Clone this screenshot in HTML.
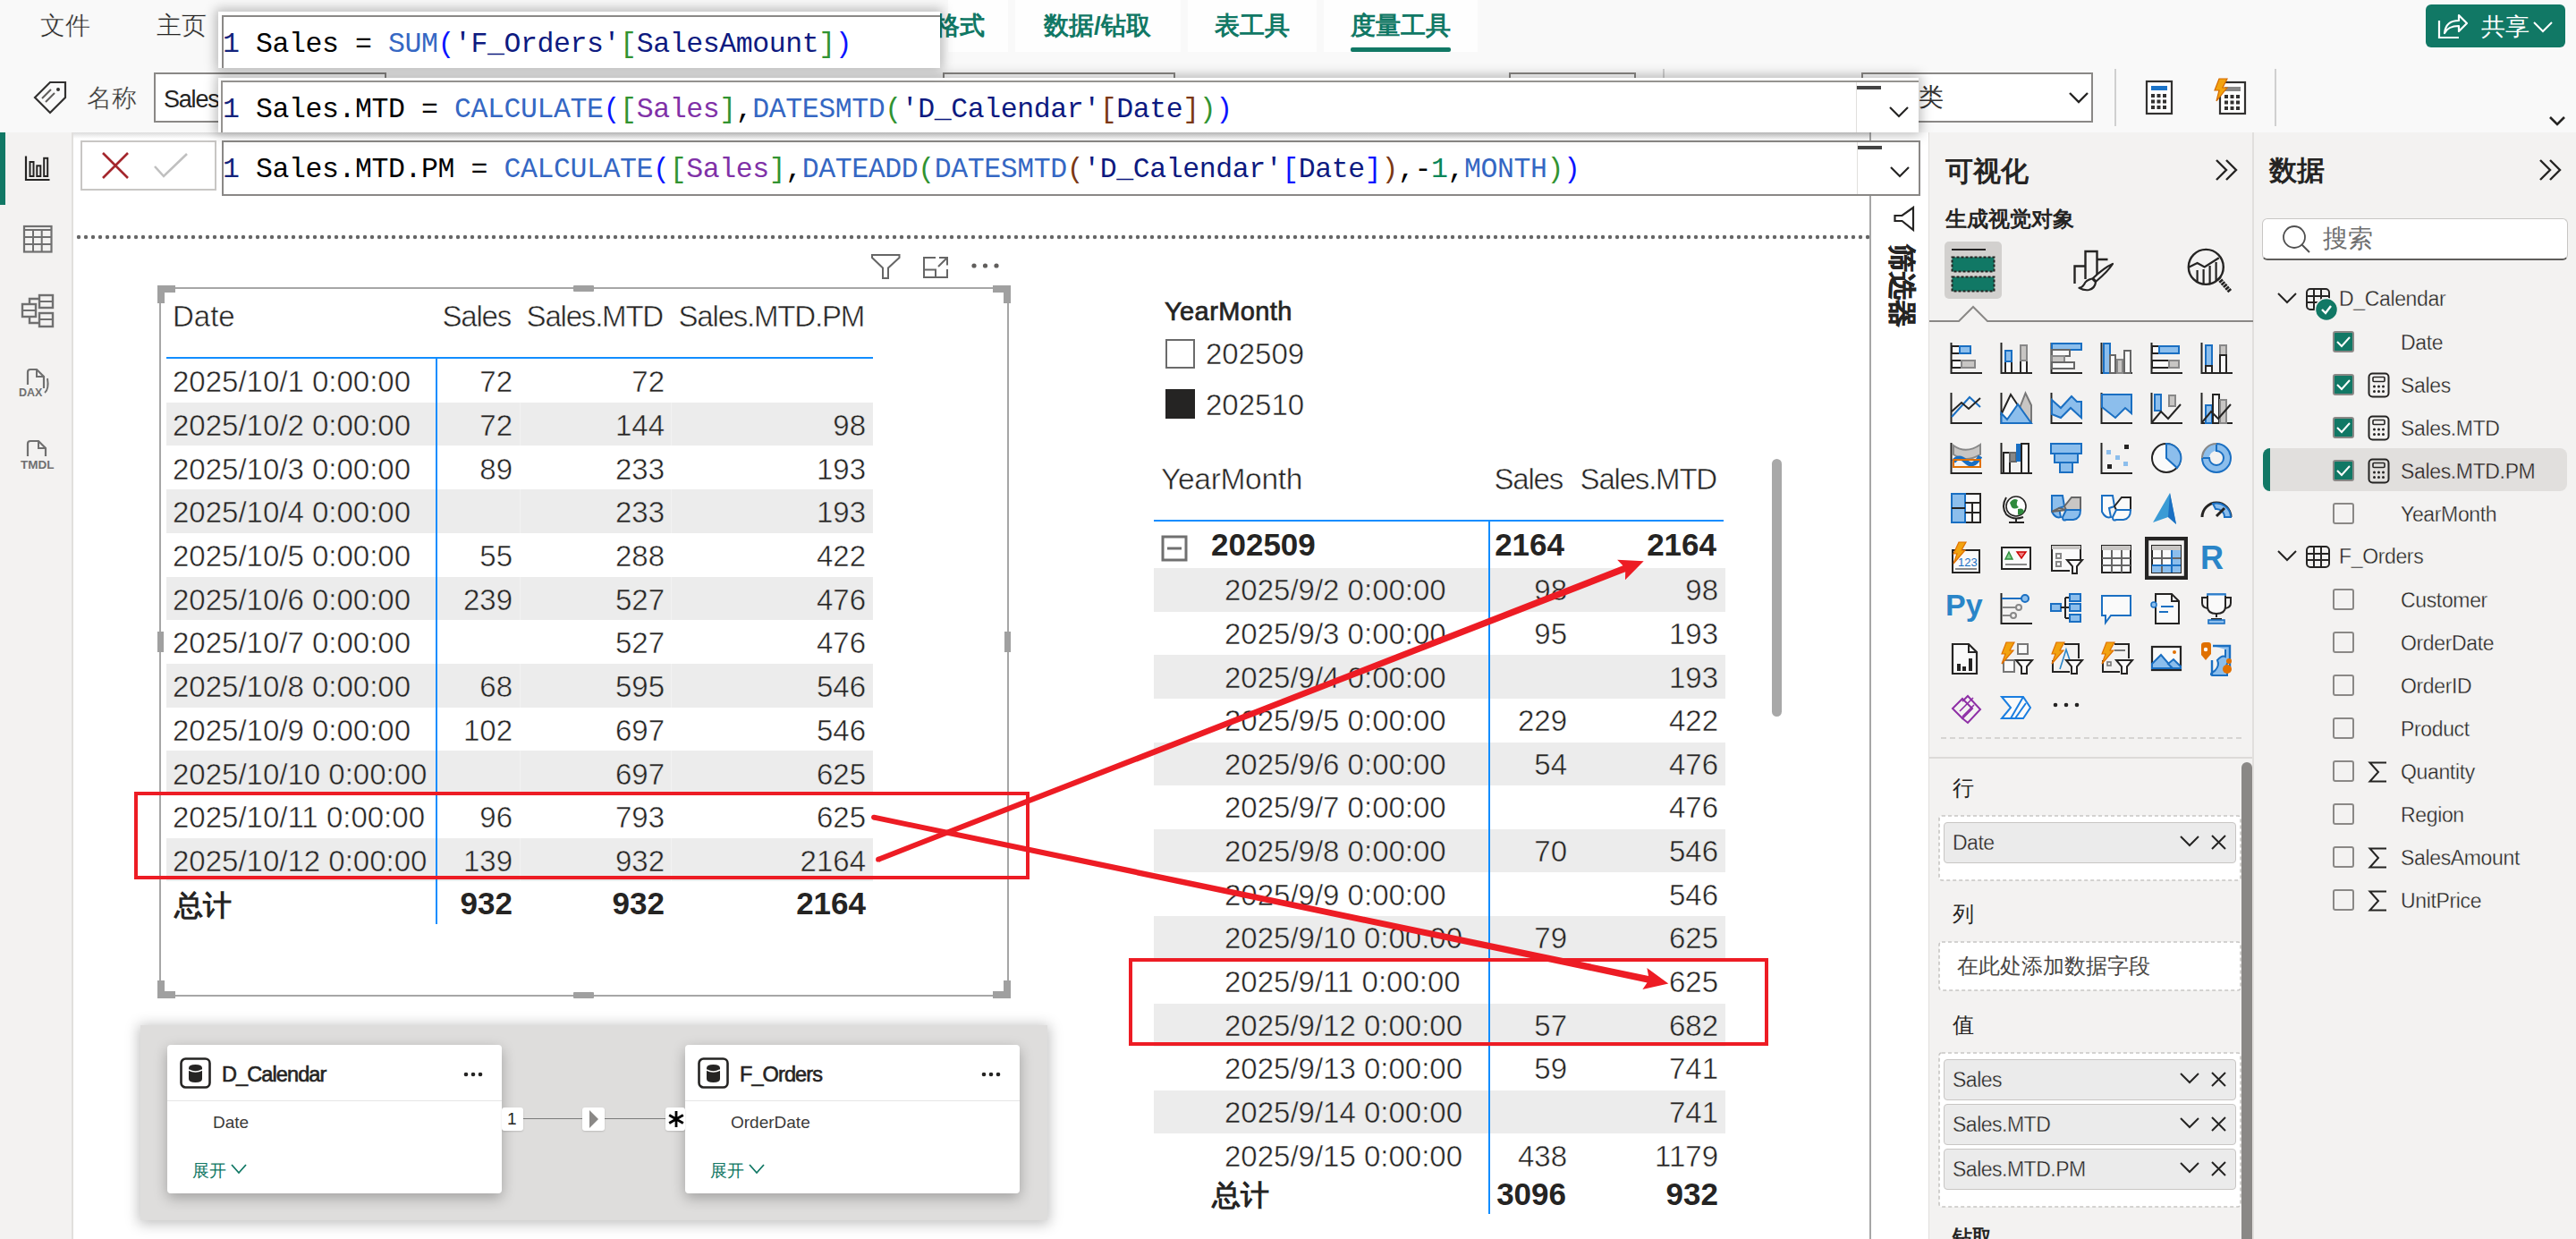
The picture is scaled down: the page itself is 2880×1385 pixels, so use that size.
<!DOCTYPE html><html><head><meta charset="utf-8"><style>
html,body{margin:0;padding:0;}
body{width:2880px;height:1385px;position:relative;overflow:hidden;background:#fff;font-family:"Liberation Sans",sans-serif;}
div{position:absolute;box-sizing:border-box;}
.t{white-space:pre;line-height:1;}
</style></head><body>
<div style="left:0px;top:0px;width:2880px;height:148px;background:#f9f9f9;"></div>
<div style="left:1060px;top:0px;width:67px;height:58px;background:#fefefe;"></div>
<div style="left:1135px;top:0px;width:185px;height:58px;background:#fefefe;"></div>
<div style="left:1328px;top:0px;width:144px;height:58px;background:#fefefe;"></div>
<div style="left:1480px;top:0px;width:172px;height:58px;background:#fefefe;"></div>
<div class="t" style="left:45px;top:15px;font-size:28px;color:#252423;font-weight:400;font-family:'Liberation Sans', sans-serif;-webkit-text-stroke:0.4px #f9f9f9;">文件</div>
<div class="t" style="left:175px;top:15px;font-size:28px;color:#252423;font-weight:400;font-family:'Liberation Sans', sans-serif;-webkit-text-stroke:0.4px #f9f9f9;">主页</div>
<div class="t" style="left:1045px;top:15px;font-size:28px;color:#117865;font-weight:700;font-family:'Liberation Sans', sans-serif;">格式</div>
<div class="t" style="left:1167px;top:15px;font-size:28px;color:#117865;font-weight:700;font-family:'Liberation Sans', sans-serif;">数据/钻取</div>
<div class="t" style="left:1358px;top:15px;font-size:28px;color:#117865;font-weight:700;font-family:'Liberation Sans', sans-serif;">表工具</div>
<div class="t" style="left:1510px;top:15px;font-size:28px;color:#117865;font-weight:700;font-family:'Liberation Sans', sans-serif;">度量工具</div>
<div style="left:1510px;top:53px;width:112px;height:5px;background:#117865;border-radius:2px;"></div>
<div style="left:2712px;top:5px;width:156px;height:48px;background:#117865;border-radius:6px;"></div>
<svg style="position:absolute;left:2724px;top:13px;" width="36" height="32" viewBox="0 0 36 32"><path d="M3 10 V29 H25" fill="none" stroke="#fff" stroke-width="2.2"/><path d="M9 24 C10 14 16 10 25 10 V4 L34 13 L25 22 V16 C17 16 12 18 9 24 Z" fill="none" stroke="#fff" stroke-width="2.2" stroke-linejoin="round"/></svg>
<div class="t" style="left:2774px;top:17px;font-size:27px;color:#fff;font-weight:400;font-family:'Liberation Sans', sans-serif;">共享</div>
<svg style="position:absolute;left:2830px;top:22px;" width="26" height="16" viewBox="0 0 26 16"><path d="M3 3 L13 13 L23 3" fill="none" stroke="#fff" stroke-width="2"/></svg>
<svg style="position:absolute;left:36px;top:89px;" width="40" height="40" viewBox="0 0 40 40"><path d="M3 20 L20 3 L37 3 L37 20 L20 37 Z" fill="none" stroke="#323130" stroke-width="2.2" stroke-linejoin="miter" transform="translate(0,0)"/><circle cx="29" cy="11" r="2" fill="#323130"/><path d="M11 21 L21 11 M15 25 L25 15" stroke="#605e5c" stroke-width="2"/></svg>
<div class="t" style="left:97px;top:96px;font-size:28px;color:#323130;font-weight:400;font-family:'Liberation Sans', sans-serif;-webkit-text-stroke:0.4px #f9f9f9;">名称</div>
<div style="left:172px;top:81px;width:260px;height:56px;background:#fff;border:2px solid #8a8886;"></div>
<div class="t" style="left:183px;top:97.5px;font-size:27px;color:#252423;font-weight:400;font-family:'Liberation Sans', sans-serif;letter-spacing:-1.2px;">Sales</div>
<div style="left:1054px;top:81px;width:260px;height:56px;background:#fff;border:2px solid #8a8886;"></div>
<div style="left:1687px;top:81px;width:142px;height:56px;background:#fff;border:2px solid #8a8886;"></div>
<div style="left:1859px;top:77px;width:2px;height:64px;background:#d0d0d0;"></div>
<div style="left:2081px;top:81px;width:259px;height:56px;background:#fff;border:2px solid #8a8886;"></div>
<div class="t" style="left:2145px;top:95px;font-size:28px;color:#323130;font-weight:400;font-family:'Liberation Sans', sans-serif;">类</div>
<svg style="position:absolute;left:2312px;top:101px;" width="24" height="16" viewBox="0 0 24 16"><path d="M2 3 L12 13 L22 3" fill="none" stroke="#252423" stroke-width="2.4"/></svg>
<div style="left:2364px;top:77px;width:2px;height:64px;background:#d0d0d0;"></div>
<svg style="position:absolute;left:2398px;top:89px;" width="34" height="40" viewBox="0 0 34 40"><rect x="2" y="2" width="28" height="36" fill="#fff" stroke="#323130" stroke-width="2.2"/><rect x="7" y="7" width="18" height="5" fill="#1a73c8"/><rect x="7.0" y="16.0" width="4" height="4" fill="#323130"/><rect x="7.0" y="22.5" width="4" height="4" fill="#323130"/><rect x="7.0" y="29.0" width="4" height="4" fill="#323130"/><rect x="13.5" y="16.0" width="4" height="4" fill="#323130"/><rect x="13.5" y="22.5" width="4" height="4" fill="#323130"/><rect x="13.5" y="29.0" width="4" height="4" fill="#323130"/><rect x="20.0" y="16.0" width="4" height="4" fill="#323130"/><rect x="20.0" y="22.5" width="4" height="4" fill="#323130"/><rect x="20.0" y="29.0" width="4" height="4" fill="#323130"/></svg>
<svg style="position:absolute;left:2472px;top:87px;" width="40" height="42" viewBox="0 0 40 42"><rect x="10" y="5" width="28" height="35" fill="#fff" stroke="#323130" stroke-width="2.2"/><rect x="15" y="10" width="18" height="5" fill="#888"/><rect x="15.0" y="19.0" width="4" height="4" fill="#323130"/><rect x="15.0" y="25.5" width="4" height="4" fill="#323130"/><rect x="15.0" y="32.0" width="4" height="4" fill="#323130"/><rect x="21.5" y="19.0" width="4" height="4" fill="#323130"/><rect x="21.5" y="25.5" width="4" height="4" fill="#323130"/><rect x="21.5" y="32.0" width="4" height="4" fill="#323130"/><rect x="28.0" y="19.0" width="4" height="4" fill="#323130"/><rect x="28.0" y="25.5" width="4" height="4" fill="#323130"/><rect x="28.0" y="32.0" width="4" height="4" fill="#323130"/><path d="M9 1 H18 L13 11 H18 L6 26 L9 14 H4 Z" fill="#f2a30f" stroke="#d56b00" stroke-width="1.2"/></svg>
<div style="left:2543px;top:77px;width:2px;height:64px;background:#d0d0d0;"></div>
<svg style="position:absolute;left:2848px;top:128px;" width="22" height="16" viewBox="0 0 22 16"><path d="M3 3 L11 11 L19 3" fill="none" stroke="#252423" stroke-width="2.6"/></svg>
<div style="left:0px;top:148px;width:2880px;height:7px;background:linear-gradient(#dcdcdc,rgba(255,255,255,0));"></div>
<div style="left:0px;top:148px;width:80px;height:1237px;background:#f3f2f1;"></div>
<div style="left:80px;top:148px;width:2px;height:1237px;background:#e1dfdd;"></div>
<div style="left:0px;top:148px;width:6px;height:81px;background:#117865;"></div>
<svg style="position:absolute;left:26px;top:172px;" width="32" height="32" viewBox="0 0 32 32"><path d="M3 2.5 V29 H29.5" fill="none" stroke="#252423" stroke-width="2.2"/><rect x="7.5" y="9" width="4" height="16" fill="none" stroke="#252423" stroke-width="2"/><rect x="15.3" y="13.3" width="4" height="11.7" fill="none" stroke="#252423" stroke-width="2"/><rect x="23.2" y="4.8" width="4" height="20.2" fill="none" stroke="#252423" stroke-width="2"/></svg>
<svg style="position:absolute;left:24px;top:250px;" width="36" height="34" viewBox="0 0 36 34"><rect x="3" y="3" width="30.5" height="28.5" fill="none" stroke="#707070" stroke-width="2.2"/><path d="M3 7 H33.5 M3 15 H33.5 M3 23 H33.5 M13 7 V31.5 M22.7 7 V31.5" stroke="#707070" stroke-width="2"/></svg>
<svg style="position:absolute;left:22px;top:328px;" width="40" height="40" viewBox="0 0 40 40"><rect x="3" y="12" width="15" height="14" fill="none" stroke="#707070" stroke-width="2.4"/><path d="M3 19 H18" stroke="#707070" stroke-width="2"/><rect x="22" y="2" width="15" height="14" fill="none" stroke="#707070" stroke-width="2.4"/><path d="M22 9 H37" stroke="#707070" stroke-width="2"/><rect x="22" y="22" width="15" height="15" fill="none" stroke="#707070" stroke-width="2.4"/><path d="M22 29 H37" stroke="#707070" stroke-width="2"/><path d="M11 12 V6 H22 M11 26 V33 H22" fill="none" stroke="#707070" stroke-width="2.4"/></svg>
<svg style="position:absolute;left:20px;top:410px;" width="40" height="36" viewBox="0 0 40 36"><path d="M11 20 V6 Q11 3 14 3 H21 L29 11 V24" fill="none" stroke="#707070" stroke-width="2.2"/><path d="M21 3 V11 H29" fill="none" stroke="#707070" stroke-width="2"/><path d="M33 13 Q35 25 30 29" fill="none" stroke="#707070" stroke-width="2"/><text x="1" y="33" font-family="Liberation Sans" font-weight="700" font-size="12.5" fill="#707070">DAX</text></svg>
<svg style="position:absolute;left:20px;top:490px;" width="44" height="36" viewBox="0 0 44 36"><path d="M11 20 V6 Q11 3 14 3 H23 L31 11 V20" fill="none" stroke="#707070" stroke-width="2.2"/><path d="M23 3 V11 H31" fill="none" stroke="#707070" stroke-width="2"/><text x="3" y="34" font-family="Liberation Sans" font-weight="700" font-size="13.5" fill="#707070">TMDL</text></svg>
<svg style="position:absolute;left:84px;top:262px;" width="2006" height="6" viewBox="0 0 2006 6"><line x1="4" y1="3" x2="2006" y2="3" stroke="#666" stroke-width="4.4" stroke-linecap="round" stroke-dasharray="0 8"/></svg>
<div style="left:2090px;top:148px;width:2px;height:1237px;background:#a6a6a6;"></div>
<div style="left:2092px;top:148px;width:64px;height:1237px;background:#fff;"></div>
<div style="left:2156px;top:148px;width:2px;height:1237px;background:#e1dfdd;"></div>
<svg style="position:absolute;left:2115px;top:230px;" width="28" height="30" viewBox="0 0 28 30"><path d="M24 2 V27 L11.5 17 H3.5 V11 H11.5 Z" fill="none" stroke="#252423" stroke-width="2.2" stroke-linejoin="miter"/></svg>
<div class="t" style="left:2142px;top:273px;font-size:31px;font-weight:700;color:#252423;-webkit-text-stroke:0.6px #252423;transform-origin:0 0;transform:rotate(90deg);">筛选器</div>
<div style="left:90px;top:157px;width:152px;height:56px;background:#fff;border:2px solid #c8c6c4;"></div>
<svg style="position:absolute;left:112px;top:168px;" width="34" height="34" viewBox="0 0 34 34"><path d="M3 3 L31 31 M31 3 L3 31" stroke="#a4262c" stroke-width="2.6"/></svg>
<svg style="position:absolute;left:170px;top:169px;" width="42" height="32" viewBox="0 0 42 32"><path d="M3 17 L13 28 L39 3" fill="none" stroke="#c0c0c0" stroke-width="2.6"/></svg>
<div style="left:248px;top:157px;width:1899px;height:62px;background:#fff;border:2px solid #8a8886;"></div>
<div style="left:2076px;top:159px;width:1px;height:58px;background:#e1dfdd;"></div>
<div style="left:2077px;top:163px;width:27px;height:4px;background:#444;"></div>
<svg style="position:absolute;left:2112px;top:185px;" width="24" height="15" viewBox="0 0 24 15"><path d="M2 2 L12 12 L22 2" fill="none" stroke="#252423" stroke-width="2.2"/></svg>
<div class="t" style="left:249px;top:173.5px;font-size:31.5px;letter-spacing:-0.4px;font-family:'Liberation Mono', monospace;"><span style="color:#13237c">1</span><span style="color:#000"> Sales.MTD.PM = </span><span style="color:#3567c3">CALCULATE</span><span style="color:#0a14ff">(</span><span style="color:#319331">[</span><span style="color:#8031a7">Sales</span><span style="color:#319331">]</span><span style="color:#000">,</span><span style="color:#3567c3">DATEADD</span><span style="color:#319331">(</span><span style="color:#3567c3">DATESMTD</span><span style="color:#7b3814">(</span><span style="color:#0d1a80">&#x27;D_Calendar&#x27;</span><span style="color:#0a14ff">[</span><span style="color:#0d1a80">Date</span><span style="color:#0a14ff">]</span><span style="color:#7b3814">)</span><span style="color:#000">,-</span><span style="color:#098658">1</span><span style="color:#000">,</span><span style="color:#3567c3">MONTH</span><span style="color:#319331">)</span><span style="color:#0a14ff">)</span></div>
<div style="left:244px;top:87px;width:1901px;height:61px;background:#fff;box-shadow:0 0 12px 3px rgba(0,0,0,0.26);overflow:hidden;"><div style="left:3px;top:3px;width:1902px;height:70px;border:2px solid #959390;border-right:none;"></div></div>
<div style="left:2075px;top:92px;width:1px;height:56px;background:#e1dfdd;"></div>
<div style="left:2076px;top:96px;width:27px;height:4px;background:#444;"></div>
<svg style="position:absolute;left:2111px;top:118px;" width="24" height="15" viewBox="0 0 24 15"><path d="M2 2 L12 12 L22 2" fill="none" stroke="#252423" stroke-width="2.2"/></svg>
<div class="t" style="left:249px;top:106.8px;font-size:31.5px;letter-spacing:-0.4px;font-family:'Liberation Mono', monospace;"><span style="color:#13237c">1</span><span style="color:#000"> Sales.MTD = </span><span style="color:#3567c3">CALCULATE</span><span style="color:#0a14ff">(</span><span style="color:#319331">[</span><span style="color:#8031a7">Sales</span><span style="color:#319331">]</span><span style="color:#000">,</span><span style="color:#3567c3">DATESMTD</span><span style="color:#319331">(</span><span style="color:#0d1a80">&#x27;D_Calendar&#x27;</span><span style="color:#7b3814">[</span><span style="color:#0d1a80">Date</span><span style="color:#7b3814">]</span><span style="color:#319331">)</span><span style="color:#0a14ff">)</span></div>
<div style="left:244px;top:13px;width:807px;height:63px;background:#fff;box-shadow:0 0 12px 3px rgba(0,0,0,0.26);overflow:hidden;"><div style="left:4px;top:4px;width:900px;height:80px;border:2px solid #8a8886;"></div></div>
<div class="t" style="left:249px;top:33.7px;font-size:31.5px;letter-spacing:-0.4px;font-family:'Liberation Mono', monospace;"><span style="color:#13237c">1</span><span style="color:#000"> Sales = </span><span style="color:#3567c3">SUM</span><span style="color:#0a14ff">(</span><span style="color:#0d1a80">&#x27;F_Orders&#x27;</span><span style="color:#319331">[</span><span style="color:#0d1a80">SalesAmount</span><span style="color:#319331">]</span><span style="color:#0a14ff">)</span></div>
<div style="left:178px;top:321px;width:950px;height:793px;border:2px solid #a6a6a6;"></div>
<div style="left:176px;top:319px;width:20px;height:8px;background:#a0a0a0;"></div>
<div style="left:176px;top:319px;width:8px;height:20px;background:#a0a0a0;"></div>
<div style="left:1110px;top:319px;width:20px;height:8px;background:#a0a0a0;"></div>
<div style="left:1122px;top:319px;width:8px;height:20px;background:#a0a0a0;"></div>
<div style="left:176px;top:1108px;width:20px;height:8px;background:#a0a0a0;"></div>
<div style="left:176px;top:1096px;width:8px;height:20px;background:#a0a0a0;"></div>
<div style="left:1110px;top:1108px;width:20px;height:8px;background:#a0a0a0;"></div>
<div style="left:1122px;top:1096px;width:8px;height:20px;background:#a0a0a0;"></div>
<div style="left:641px;top:319px;width:23px;height:7px;background:#a0a0a0;border-radius:1px;"></div>
<div style="left:641px;top:1109px;width:23px;height:7px;background:#a0a0a0;border-radius:1px;"></div>
<div style="left:176px;top:706px;width:7px;height:23px;background:#a0a0a0;"></div>
<div style="left:1123px;top:706px;width:7px;height:23px;background:#a0a0a0;"></div>
<svg style="position:absolute;left:970px;top:280px;" width="40" height="34" viewBox="0 0 40 34"><path d="M5 5 H35.5 V8 L23 19.5 V31 H17 V19.5 L5 8 Z" fill="none" stroke="#666" stroke-width="2" stroke-linejoin="miter"/></svg>
<svg style="position:absolute;left:1028px;top:283px;" width="36" height="32" viewBox="0 0 36 32"><path d="M18 5 H5 V27 H31 V18 M31 13.5 V5 H22 M5 18.5 H18 V27 M21 15 L30.5 5.5" fill="none" stroke="#666" stroke-width="2" stroke-linejoin="miter"/></svg>
<svg style="position:absolute;left:1084px;top:292px;" width="36" height="10" viewBox="0 0 36 10"><circle cx="5.0" cy="5" r="2.6" fill="#605e5c"/><circle cx="17.5" cy="5" r="2.6" fill="#605e5c"/><circle cx="30.0" cy="5" r="2.6" fill="#605e5c"/></svg>
<div style="left:186px;top:449.7px;width:790px;height:48.7px;background:#ececec;"></div>
<div style="left:581px;top:449.7px;width:1px;height:48.7px;background:#f2f2f2;"></div>
<div style="left:750px;top:449.7px;width:1px;height:48.7px;background:#f2f2f2;"></div>
<div style="left:186px;top:547.1px;width:790px;height:48.7px;background:#ececec;"></div>
<div style="left:581px;top:547.1px;width:1px;height:48.7px;background:#f2f2f2;"></div>
<div style="left:750px;top:547.1px;width:1px;height:48.7px;background:#f2f2f2;"></div>
<div style="left:186px;top:644.5px;width:790px;height:48.7px;background:#ececec;"></div>
<div style="left:581px;top:644.5px;width:1px;height:48.7px;background:#f2f2f2;"></div>
<div style="left:750px;top:644.5px;width:1px;height:48.7px;background:#f2f2f2;"></div>
<div style="left:186px;top:741.9px;width:790px;height:48.7px;background:#ececec;"></div>
<div style="left:581px;top:741.9px;width:1px;height:48.7px;background:#f2f2f2;"></div>
<div style="left:750px;top:741.9px;width:1px;height:48.7px;background:#f2f2f2;"></div>
<div style="left:186px;top:839.3px;width:790px;height:48.7px;background:#ececec;"></div>
<div style="left:581px;top:839.3px;width:1px;height:48.7px;background:#f2f2f2;"></div>
<div style="left:750px;top:839.3px;width:1px;height:48.7px;background:#f2f2f2;"></div>
<div style="left:186px;top:936.7px;width:790px;height:48.7px;background:#ececec;"></div>
<div style="left:581px;top:936.7px;width:1px;height:48.7px;background:#f2f2f2;"></div>
<div style="left:750px;top:936.7px;width:1px;height:48.7px;background:#f2f2f2;"></div>
<div class="t" style="left:193px;top:410.2px;font-size:33px;color:#252423;font-weight:400;font-family:'Liberation Sans', sans-serif;-webkit-text-stroke:0.5px #fff;">2025/10/1 0:00:00</div>
<div class="t" style="left:-27px;width:600px;text-align:right;top:410.2px;font-size:33px;color:#252423;font-weight:400;font-family:'Liberation Sans', sans-serif;-webkit-text-stroke:0.5px #fff;">72</div>
<div class="t" style="left:143px;width:600px;text-align:right;top:410.2px;font-size:33px;color:#252423;font-weight:400;font-family:'Liberation Sans', sans-serif;-webkit-text-stroke:0.5px #fff;">72</div>
<div class="t" style="left:193px;top:458.9px;font-size:33px;color:#252423;font-weight:400;font-family:'Liberation Sans', sans-serif;-webkit-text-stroke:0.5px #ececec;">2025/10/2 0:00:00</div>
<div class="t" style="left:-27px;width:600px;text-align:right;top:458.9px;font-size:33px;color:#252423;font-weight:400;font-family:'Liberation Sans', sans-serif;-webkit-text-stroke:0.5px #ececec;">72</div>
<div class="t" style="left:143px;width:600px;text-align:right;top:458.9px;font-size:33px;color:#252423;font-weight:400;font-family:'Liberation Sans', sans-serif;-webkit-text-stroke:0.5px #ececec;">144</div>
<div class="t" style="left:368px;width:600px;text-align:right;top:458.9px;font-size:33px;color:#252423;font-weight:400;font-family:'Liberation Sans', sans-serif;-webkit-text-stroke:0.5px #ececec;">98</div>
<div class="t" style="left:193px;top:507.6px;font-size:33px;color:#252423;font-weight:400;font-family:'Liberation Sans', sans-serif;-webkit-text-stroke:0.5px #fff;">2025/10/3 0:00:00</div>
<div class="t" style="left:-27px;width:600px;text-align:right;top:507.6px;font-size:33px;color:#252423;font-weight:400;font-family:'Liberation Sans', sans-serif;-webkit-text-stroke:0.5px #fff;">89</div>
<div class="t" style="left:143px;width:600px;text-align:right;top:507.6px;font-size:33px;color:#252423;font-weight:400;font-family:'Liberation Sans', sans-serif;-webkit-text-stroke:0.5px #fff;">233</div>
<div class="t" style="left:368px;width:600px;text-align:right;top:507.6px;font-size:33px;color:#252423;font-weight:400;font-family:'Liberation Sans', sans-serif;-webkit-text-stroke:0.5px #fff;">193</div>
<div class="t" style="left:193px;top:556.3px;font-size:33px;color:#252423;font-weight:400;font-family:'Liberation Sans', sans-serif;-webkit-text-stroke:0.5px #ececec;">2025/10/4 0:00:00</div>
<div class="t" style="left:143px;width:600px;text-align:right;top:556.3px;font-size:33px;color:#252423;font-weight:400;font-family:'Liberation Sans', sans-serif;-webkit-text-stroke:0.5px #ececec;">233</div>
<div class="t" style="left:368px;width:600px;text-align:right;top:556.3px;font-size:33px;color:#252423;font-weight:400;font-family:'Liberation Sans', sans-serif;-webkit-text-stroke:0.5px #ececec;">193</div>
<div class="t" style="left:193px;top:605.0px;font-size:33px;color:#252423;font-weight:400;font-family:'Liberation Sans', sans-serif;-webkit-text-stroke:0.5px #fff;">2025/10/5 0:00:00</div>
<div class="t" style="left:-27px;width:600px;text-align:right;top:605.0px;font-size:33px;color:#252423;font-weight:400;font-family:'Liberation Sans', sans-serif;-webkit-text-stroke:0.5px #fff;">55</div>
<div class="t" style="left:143px;width:600px;text-align:right;top:605.0px;font-size:33px;color:#252423;font-weight:400;font-family:'Liberation Sans', sans-serif;-webkit-text-stroke:0.5px #fff;">288</div>
<div class="t" style="left:368px;width:600px;text-align:right;top:605.0px;font-size:33px;color:#252423;font-weight:400;font-family:'Liberation Sans', sans-serif;-webkit-text-stroke:0.5px #fff;">422</div>
<div class="t" style="left:193px;top:653.7px;font-size:33px;color:#252423;font-weight:400;font-family:'Liberation Sans', sans-serif;-webkit-text-stroke:0.5px #ececec;">2025/10/6 0:00:00</div>
<div class="t" style="left:-27px;width:600px;text-align:right;top:653.7px;font-size:33px;color:#252423;font-weight:400;font-family:'Liberation Sans', sans-serif;-webkit-text-stroke:0.5px #ececec;">239</div>
<div class="t" style="left:143px;width:600px;text-align:right;top:653.7px;font-size:33px;color:#252423;font-weight:400;font-family:'Liberation Sans', sans-serif;-webkit-text-stroke:0.5px #ececec;">527</div>
<div class="t" style="left:368px;width:600px;text-align:right;top:653.7px;font-size:33px;color:#252423;font-weight:400;font-family:'Liberation Sans', sans-serif;-webkit-text-stroke:0.5px #ececec;">476</div>
<div class="t" style="left:193px;top:702.4px;font-size:33px;color:#252423;font-weight:400;font-family:'Liberation Sans', sans-serif;-webkit-text-stroke:0.5px #fff;">2025/10/7 0:00:00</div>
<div class="t" style="left:143px;width:600px;text-align:right;top:702.4px;font-size:33px;color:#252423;font-weight:400;font-family:'Liberation Sans', sans-serif;-webkit-text-stroke:0.5px #fff;">527</div>
<div class="t" style="left:368px;width:600px;text-align:right;top:702.4px;font-size:33px;color:#252423;font-weight:400;font-family:'Liberation Sans', sans-serif;-webkit-text-stroke:0.5px #fff;">476</div>
<div class="t" style="left:193px;top:751.1px;font-size:33px;color:#252423;font-weight:400;font-family:'Liberation Sans', sans-serif;-webkit-text-stroke:0.5px #ececec;">2025/10/8 0:00:00</div>
<div class="t" style="left:-27px;width:600px;text-align:right;top:751.1px;font-size:33px;color:#252423;font-weight:400;font-family:'Liberation Sans', sans-serif;-webkit-text-stroke:0.5px #ececec;">68</div>
<div class="t" style="left:143px;width:600px;text-align:right;top:751.1px;font-size:33px;color:#252423;font-weight:400;font-family:'Liberation Sans', sans-serif;-webkit-text-stroke:0.5px #ececec;">595</div>
<div class="t" style="left:368px;width:600px;text-align:right;top:751.1px;font-size:33px;color:#252423;font-weight:400;font-family:'Liberation Sans', sans-serif;-webkit-text-stroke:0.5px #ececec;">546</div>
<div class="t" style="left:193px;top:799.8px;font-size:33px;color:#252423;font-weight:400;font-family:'Liberation Sans', sans-serif;-webkit-text-stroke:0.5px #fff;">2025/10/9 0:00:00</div>
<div class="t" style="left:-27px;width:600px;text-align:right;top:799.8px;font-size:33px;color:#252423;font-weight:400;font-family:'Liberation Sans', sans-serif;-webkit-text-stroke:0.5px #fff;">102</div>
<div class="t" style="left:143px;width:600px;text-align:right;top:799.8px;font-size:33px;color:#252423;font-weight:400;font-family:'Liberation Sans', sans-serif;-webkit-text-stroke:0.5px #fff;">697</div>
<div class="t" style="left:368px;width:600px;text-align:right;top:799.8px;font-size:33px;color:#252423;font-weight:400;font-family:'Liberation Sans', sans-serif;-webkit-text-stroke:0.5px #fff;">546</div>
<div class="t" style="left:193px;top:848.5px;font-size:33px;color:#252423;font-weight:400;font-family:'Liberation Sans', sans-serif;-webkit-text-stroke:0.5px #ececec;">2025/10/10 0:00:00</div>
<div class="t" style="left:143px;width:600px;text-align:right;top:848.5px;font-size:33px;color:#252423;font-weight:400;font-family:'Liberation Sans', sans-serif;-webkit-text-stroke:0.5px #ececec;">697</div>
<div class="t" style="left:368px;width:600px;text-align:right;top:848.5px;font-size:33px;color:#252423;font-weight:400;font-family:'Liberation Sans', sans-serif;-webkit-text-stroke:0.5px #ececec;">625</div>
<div class="t" style="left:193px;top:897.2px;font-size:33px;color:#252423;font-weight:400;font-family:'Liberation Sans', sans-serif;-webkit-text-stroke:0.5px #fff;">2025/10/11 0:00:00</div>
<div class="t" style="left:-27px;width:600px;text-align:right;top:897.2px;font-size:33px;color:#252423;font-weight:400;font-family:'Liberation Sans', sans-serif;-webkit-text-stroke:0.5px #fff;">96</div>
<div class="t" style="left:143px;width:600px;text-align:right;top:897.2px;font-size:33px;color:#252423;font-weight:400;font-family:'Liberation Sans', sans-serif;-webkit-text-stroke:0.5px #fff;">793</div>
<div class="t" style="left:368px;width:600px;text-align:right;top:897.2px;font-size:33px;color:#252423;font-weight:400;font-family:'Liberation Sans', sans-serif;-webkit-text-stroke:0.5px #fff;">625</div>
<div class="t" style="left:193px;top:945.9px;font-size:33px;color:#252423;font-weight:400;font-family:'Liberation Sans', sans-serif;-webkit-text-stroke:0.5px #ececec;">2025/10/12 0:00:00</div>
<div class="t" style="left:-27px;width:600px;text-align:right;top:945.9px;font-size:33px;color:#252423;font-weight:400;font-family:'Liberation Sans', sans-serif;-webkit-text-stroke:0.5px #ececec;">139</div>
<div class="t" style="left:143px;width:600px;text-align:right;top:945.9px;font-size:33px;color:#252423;font-weight:400;font-family:'Liberation Sans', sans-serif;-webkit-text-stroke:0.5px #ececec;">932</div>
<div class="t" style="left:368px;width:600px;text-align:right;top:945.9px;font-size:33px;color:#252423;font-weight:400;font-family:'Liberation Sans', sans-serif;-webkit-text-stroke:0.5px #ececec;">2164</div>
<div class="t" style="left:193px;top:337px;font-size:33px;color:#252423;font-weight:400;font-family:'Liberation Sans', sans-serif;-webkit-text-stroke:0.5px #fff;">Date</div>
<div class="t" style="left:-29px;width:600px;text-align:right;top:337px;font-size:33px;color:#252423;font-weight:400;font-family:'Liberation Sans', sans-serif;letter-spacing:-1.2px;-webkit-text-stroke:0.5px #fff;">Sales</div>
<div class="t" style="left:141px;width:600px;text-align:right;top:337px;font-size:33px;color:#252423;font-weight:400;font-family:'Liberation Sans', sans-serif;letter-spacing:-1.2px;-webkit-text-stroke:0.5px #fff;">Sales.MTD</div>
<div class="t" style="left:366px;width:600px;text-align:right;top:337px;font-size:33px;color:#252423;font-weight:400;font-family:'Liberation Sans', sans-serif;letter-spacing:-1.2px;-webkit-text-stroke:0.5px #fff;">Sales.MTD.PM</div>
<div style="left:186px;top:399px;width:790px;height:2px;background:#118dff;"></div>
<div style="left:487px;top:401px;width:2px;height:632px;background:#118dff;"></div>
<div class="t" style="left:195px;top:996px;font-size:32px;color:#252423;font-weight:700;font-family:'Liberation Sans', sans-serif;">总计</div>
<div class="t" style="left:-27px;width:600px;text-align:right;top:992.4px;font-size:35px;color:#252423;font-weight:700;font-family:'Liberation Sans', sans-serif;">932</div>
<div class="t" style="left:143px;width:600px;text-align:right;top:992.4px;font-size:35px;color:#252423;font-weight:700;font-family:'Liberation Sans', sans-serif;">932</div>
<div class="t" style="left:368px;width:600px;text-align:right;top:992.4px;font-size:35px;color:#252423;font-weight:700;font-family:'Liberation Sans', sans-serif;">2164</div>
<div style="left:157px;top:1146px;width:1014px;height:218px;background:#dedddc;box-shadow:0 2px 14px 2px rgba(0,0,0,0.25);"></div>
<div style="left:187px;top:1168px;width:374px;height:166px;background:#fff;border-radius:4px;box-shadow:0 5px 15px rgba(0,0,0,0.28);"></div>
<svg style="position:absolute;left:201px;top:1182px;" width="36" height="36" viewBox="0 0 36 36"><rect x="1.5" y="1.5" width="32" height="32" rx="5" fill="none" stroke="#252423" stroke-width="2.6"/><path d="M10 12 Q10 8 17.5 8 Q25 8 25 12 V24 Q25 28 17.5 28 Q10 28 10 24 Z" fill="#252423"/><path d="M10 14 Q17.5 18 25 14" fill="none" stroke="#fff" stroke-width="1.6"/></svg>
<div class="t" style="left:248px;top:1189.5px;font-size:23.5px;color:#252423;font-weight:400;font-family:'Liberation Sans', sans-serif;letter-spacing:-0.9px;-webkit-text-stroke:0.6px #252423;">D_Calendar</div>
<svg style="position:absolute;left:517px;top:1196px;" width="24" height="10" viewBox="0 0 24 10"><circle cx="4" cy="5" r="2.3" fill="#252423"/><circle cx="12" cy="5" r="2.3" fill="#252423"/><circle cx="20" cy="5" r="2.3" fill="#252423"/></svg>
<div style="left:187px;top:1230px;width:374px;height:1px;background:#e6e6e6;"></div>
<div class="t" style="left:238px;top:1245px;font-size:19px;color:#3b3a39;font-weight:400;font-family:'Liberation Sans', sans-serif;">Date</div>
<div class="t" style="left:215px;top:1299px;font-size:19px;color:#117865;font-weight:400;font-family:'Liberation Sans', sans-serif;">展开</div>
<svg style="position:absolute;left:257px;top:1300px;" width="22" height="14" viewBox="0 0 22 14"><path d="M2 2 L10 11 L18 2" fill="none" stroke="#117865" stroke-width="1.8"/></svg>
<div style="left:766px;top:1168px;width:374px;height:166px;background:#fff;border-radius:4px;box-shadow:0 5px 15px rgba(0,0,0,0.28);"></div>
<svg style="position:absolute;left:780px;top:1182px;" width="36" height="36" viewBox="0 0 36 36"><rect x="1.5" y="1.5" width="32" height="32" rx="5" fill="none" stroke="#252423" stroke-width="2.6"/><path d="M10 12 Q10 8 17.5 8 Q25 8 25 12 V24 Q25 28 17.5 28 Q10 28 10 24 Z" fill="#252423"/><path d="M10 14 Q17.5 18 25 14" fill="none" stroke="#fff" stroke-width="1.6"/></svg>
<div class="t" style="left:827px;top:1189.5px;font-size:23.5px;color:#252423;font-weight:400;font-family:'Liberation Sans', sans-serif;letter-spacing:-0.9px;-webkit-text-stroke:0.6px #252423;">F_Orders</div>
<svg style="position:absolute;left:1096px;top:1196px;" width="24" height="10" viewBox="0 0 24 10"><circle cx="4" cy="5" r="2.3" fill="#252423"/><circle cx="12" cy="5" r="2.3" fill="#252423"/><circle cx="20" cy="5" r="2.3" fill="#252423"/></svg>
<div style="left:766px;top:1230px;width:374px;height:1px;background:#e6e6e6;"></div>
<div class="t" style="left:817px;top:1245px;font-size:19px;color:#3b3a39;font-weight:400;font-family:'Liberation Sans', sans-serif;">OrderDate</div>
<div class="t" style="left:794px;top:1299px;font-size:19px;color:#117865;font-weight:400;font-family:'Liberation Sans', sans-serif;">展开</div>
<svg style="position:absolute;left:836px;top:1300px;" width="22" height="14" viewBox="0 0 22 14"><path d="M2 2 L10 11 L18 2" fill="none" stroke="#117865" stroke-width="1.8"/></svg>
<div style="left:585px;top:1249.5px;width:66px;height:1.5px;background:#7a7a7a;"></div>
<div style="left:676px;top:1249.5px;width:68px;height:1.5px;background:#7a7a7a;"></div>
<div style="left:561px;top:1238px;width:24px;height:26px;background:#fff;border-radius:3px;box-shadow:0 1px 2px rgba(0,0,0,0.15);"></div>
<div style="left:651px;top:1238px;width:25px;height:26px;background:#fff;border-radius:3px;box-shadow:0 1px 2px rgba(0,0,0,0.15);"></div>
<div style="left:744px;top:1238px;width:22px;height:26px;background:#fff;border-radius:3px;box-shadow:0 1px 2px rgba(0,0,0,0.15);"></div>
<div class="t" style="left:567px;top:1241px;font-size:19px;color:#252423;font-weight:400;font-family:'Liberation Sans', sans-serif;">1</div>
<svg style="position:absolute;left:657px;top:1240px;" width="14" height="22" viewBox="0 0 14 22"><path d="M2 1 L12 11 L2 21 Z" fill="#8a8886"/></svg>
<svg style="position:absolute;left:746px;top:1241px;" width="20" height="20" viewBox="0 0 20 20"><path d="M10 1 V19 M2.2 5.5 L17.8 14.5 M2.2 14.5 L17.8 5.5" stroke="#000" stroke-width="2.8"/></svg>
<div class="t" style="left:1302px;top:333.5px;font-size:29px;color:#252423;font-weight:400;font-family:'Liberation Sans', sans-serif;letter-spacing:0.4px;-webkit-text-stroke:0.7px #252423;">YearMonth</div>
<div style="left:1302.5px;top:379px;width:33px;height:33px;border:2px solid #6b6b6b;background:#fff;"></div>
<div class="t" style="left:1348px;top:379.2px;font-size:33px;color:#252423;font-weight:400;font-family:'Liberation Sans', sans-serif;-webkit-text-stroke:0.5px #fff;">202509</div>
<div style="left:1302.5px;top:435px;width:33px;height:33px;background:#252423;"></div>
<div class="t" style="left:1348px;top:435.9px;font-size:33px;color:#252423;font-weight:400;font-family:'Liberation Sans', sans-serif;-webkit-text-stroke:0.5px #fff;">202510</div>
<div class="t" style="left:1298px;top:519.1px;font-size:33.5px;color:#252423;font-weight:400;font-family:'Liberation Sans', sans-serif;letter-spacing:-0.3px;-webkit-text-stroke:0.5px #fff;">YearMonth</div>
<div class="t" style="left:1147px;width:600px;text-align:right;top:518.6px;font-size:33px;color:#252423;font-weight:400;font-family:'Liberation Sans', sans-serif;letter-spacing:-1.2px;-webkit-text-stroke:0.5px #fff;">Sales</div>
<div class="t" style="left:1319px;width:600px;text-align:right;top:518.6px;font-size:33px;color:#252423;font-weight:400;font-family:'Liberation Sans', sans-serif;letter-spacing:-1.2px;-webkit-text-stroke:0.5px #fff;">Sales.MTD</div>
<div style="left:1290px;top:635.0px;width:639px;height:48.6px;background:#ececec;"></div>
<div style="left:1290px;top:732.3px;width:639px;height:48.6px;background:#ececec;"></div>
<div style="left:1290px;top:829.6px;width:639px;height:48.6px;background:#ececec;"></div>
<div style="left:1290px;top:926.9px;width:639px;height:48.6px;background:#ececec;"></div>
<div style="left:1290px;top:1024.2px;width:639px;height:48.6px;background:#ececec;"></div>
<div style="left:1290px;top:1121.5px;width:639px;height:48.6px;background:#ececec;"></div>
<div style="left:1290px;top:1218.8px;width:639px;height:48.6px;background:#ececec;"></div>
<div class="t" style="left:1369px;top:643.2px;font-size:33px;color:#252423;font-weight:400;font-family:'Liberation Sans', sans-serif;-webkit-text-stroke:0.5px #ececec;">2025/9/2 0:00:00</div>
<div class="t" style="left:1152px;width:600px;text-align:right;top:643.2px;font-size:33px;color:#252423;font-weight:400;font-family:'Liberation Sans', sans-serif;-webkit-text-stroke:0.5px #ececec;">98</div>
<div class="t" style="left:1321px;width:600px;text-align:right;top:643.2px;font-size:33px;color:#252423;font-weight:400;font-family:'Liberation Sans', sans-serif;-webkit-text-stroke:0.5px #ececec;">98</div>
<div class="t" style="left:1369px;top:691.8px;font-size:33px;color:#252423;font-weight:400;font-family:'Liberation Sans', sans-serif;-webkit-text-stroke:0.5px #fff;">2025/9/3 0:00:00</div>
<div class="t" style="left:1152px;width:600px;text-align:right;top:691.8px;font-size:33px;color:#252423;font-weight:400;font-family:'Liberation Sans', sans-serif;-webkit-text-stroke:0.5px #fff;">95</div>
<div class="t" style="left:1321px;width:600px;text-align:right;top:691.8px;font-size:33px;color:#252423;font-weight:400;font-family:'Liberation Sans', sans-serif;-webkit-text-stroke:0.5px #fff;">193</div>
<div class="t" style="left:1369px;top:740.5px;font-size:33px;color:#252423;font-weight:400;font-family:'Liberation Sans', sans-serif;-webkit-text-stroke:0.5px #ececec;">2025/9/4 0:00:00</div>
<div class="t" style="left:1321px;width:600px;text-align:right;top:740.5px;font-size:33px;color:#252423;font-weight:400;font-family:'Liberation Sans', sans-serif;-webkit-text-stroke:0.5px #ececec;">193</div>
<div class="t" style="left:1369px;top:789.1px;font-size:33px;color:#252423;font-weight:400;font-family:'Liberation Sans', sans-serif;-webkit-text-stroke:0.5px #fff;">2025/9/5 0:00:00</div>
<div class="t" style="left:1152px;width:600px;text-align:right;top:789.1px;font-size:33px;color:#252423;font-weight:400;font-family:'Liberation Sans', sans-serif;-webkit-text-stroke:0.5px #fff;">229</div>
<div class="t" style="left:1321px;width:600px;text-align:right;top:789.1px;font-size:33px;color:#252423;font-weight:400;font-family:'Liberation Sans', sans-serif;-webkit-text-stroke:0.5px #fff;">422</div>
<div class="t" style="left:1369px;top:837.8px;font-size:33px;color:#252423;font-weight:400;font-family:'Liberation Sans', sans-serif;-webkit-text-stroke:0.5px #ececec;">2025/9/6 0:00:00</div>
<div class="t" style="left:1152px;width:600px;text-align:right;top:837.8px;font-size:33px;color:#252423;font-weight:400;font-family:'Liberation Sans', sans-serif;-webkit-text-stroke:0.5px #ececec;">54</div>
<div class="t" style="left:1321px;width:600px;text-align:right;top:837.8px;font-size:33px;color:#252423;font-weight:400;font-family:'Liberation Sans', sans-serif;-webkit-text-stroke:0.5px #ececec;">476</div>
<div class="t" style="left:1369px;top:886.4px;font-size:33px;color:#252423;font-weight:400;font-family:'Liberation Sans', sans-serif;-webkit-text-stroke:0.5px #fff;">2025/9/7 0:00:00</div>
<div class="t" style="left:1321px;width:600px;text-align:right;top:886.4px;font-size:33px;color:#252423;font-weight:400;font-family:'Liberation Sans', sans-serif;-webkit-text-stroke:0.5px #fff;">476</div>
<div class="t" style="left:1369px;top:935.1px;font-size:33px;color:#252423;font-weight:400;font-family:'Liberation Sans', sans-serif;-webkit-text-stroke:0.5px #ececec;">2025/9/8 0:00:00</div>
<div class="t" style="left:1152px;width:600px;text-align:right;top:935.1px;font-size:33px;color:#252423;font-weight:400;font-family:'Liberation Sans', sans-serif;-webkit-text-stroke:0.5px #ececec;">70</div>
<div class="t" style="left:1321px;width:600px;text-align:right;top:935.1px;font-size:33px;color:#252423;font-weight:400;font-family:'Liberation Sans', sans-serif;-webkit-text-stroke:0.5px #ececec;">546</div>
<div class="t" style="left:1369px;top:983.7px;font-size:33px;color:#252423;font-weight:400;font-family:'Liberation Sans', sans-serif;-webkit-text-stroke:0.5px #fff;">2025/9/9 0:00:00</div>
<div class="t" style="left:1321px;width:600px;text-align:right;top:983.7px;font-size:33px;color:#252423;font-weight:400;font-family:'Liberation Sans', sans-serif;-webkit-text-stroke:0.5px #fff;">546</div>
<div class="t" style="left:1369px;top:1032.4px;font-size:33px;color:#252423;font-weight:400;font-family:'Liberation Sans', sans-serif;-webkit-text-stroke:0.5px #ececec;">2025/9/10 0:00:00</div>
<div class="t" style="left:1152px;width:600px;text-align:right;top:1032.4px;font-size:33px;color:#252423;font-weight:400;font-family:'Liberation Sans', sans-serif;-webkit-text-stroke:0.5px #ececec;">79</div>
<div class="t" style="left:1321px;width:600px;text-align:right;top:1032.4px;font-size:33px;color:#252423;font-weight:400;font-family:'Liberation Sans', sans-serif;-webkit-text-stroke:0.5px #ececec;">625</div>
<div class="t" style="left:1369px;top:1081.0px;font-size:33px;color:#252423;font-weight:400;font-family:'Liberation Sans', sans-serif;-webkit-text-stroke:0.5px #fff;">2025/9/11 0:00:00</div>
<div class="t" style="left:1321px;width:600px;text-align:right;top:1081.0px;font-size:33px;color:#252423;font-weight:400;font-family:'Liberation Sans', sans-serif;-webkit-text-stroke:0.5px #fff;">625</div>
<div class="t" style="left:1369px;top:1129.7px;font-size:33px;color:#252423;font-weight:400;font-family:'Liberation Sans', sans-serif;-webkit-text-stroke:0.5px #ececec;">2025/9/12 0:00:00</div>
<div class="t" style="left:1152px;width:600px;text-align:right;top:1129.7px;font-size:33px;color:#252423;font-weight:400;font-family:'Liberation Sans', sans-serif;-webkit-text-stroke:0.5px #ececec;">57</div>
<div class="t" style="left:1321px;width:600px;text-align:right;top:1129.7px;font-size:33px;color:#252423;font-weight:400;font-family:'Liberation Sans', sans-serif;-webkit-text-stroke:0.5px #ececec;">682</div>
<div class="t" style="left:1369px;top:1178.3px;font-size:33px;color:#252423;font-weight:400;font-family:'Liberation Sans', sans-serif;-webkit-text-stroke:0.5px #fff;">2025/9/13 0:00:00</div>
<div class="t" style="left:1152px;width:600px;text-align:right;top:1178.3px;font-size:33px;color:#252423;font-weight:400;font-family:'Liberation Sans', sans-serif;-webkit-text-stroke:0.5px #fff;">59</div>
<div class="t" style="left:1321px;width:600px;text-align:right;top:1178.3px;font-size:33px;color:#252423;font-weight:400;font-family:'Liberation Sans', sans-serif;-webkit-text-stroke:0.5px #fff;">741</div>
<div class="t" style="left:1369px;top:1227.0px;font-size:33px;color:#252423;font-weight:400;font-family:'Liberation Sans', sans-serif;-webkit-text-stroke:0.5px #ececec;">2025/9/14 0:00:00</div>
<div class="t" style="left:1321px;width:600px;text-align:right;top:1227.0px;font-size:33px;color:#252423;font-weight:400;font-family:'Liberation Sans', sans-serif;-webkit-text-stroke:0.5px #ececec;">741</div>
<div class="t" style="left:1369px;top:1275.6px;font-size:33px;color:#252423;font-weight:400;font-family:'Liberation Sans', sans-serif;-webkit-text-stroke:0.5px #fff;">2025/9/15 0:00:00</div>
<div class="t" style="left:1152px;width:600px;text-align:right;top:1275.6px;font-size:33px;color:#252423;font-weight:400;font-family:'Liberation Sans', sans-serif;-webkit-text-stroke:0.5px #fff;">438</div>
<div class="t" style="left:1321px;width:600px;text-align:right;top:1275.6px;font-size:33px;color:#252423;font-weight:400;font-family:'Liberation Sans', sans-serif;-webkit-text-stroke:0.5px #fff;">1179</div>
<div style="left:1290px;top:581px;width:637px;height:2px;background:#118dff;"></div>
<div style="left:1664px;top:583px;width:2px;height:774px;background:#118dff;"></div>
<svg style="position:absolute;left:1298px;top:598px;" width="31" height="31" viewBox="0 0 31 31"><rect x="2" y="2" width="26" height="26" fill="none" stroke="#707070" stroke-width="3"/><path d="M7 15 H23" stroke="#707070" stroke-width="3"/></svg>
<div class="t" style="left:1354px;top:590.9px;font-size:35px;color:#252423;font-weight:700;font-family:'Liberation Sans', sans-serif;">202509</div>
<div class="t" style="left:1149px;width:600px;text-align:right;top:590.9px;font-size:35px;color:#252423;font-weight:700;font-family:'Liberation Sans', sans-serif;">2164</div>
<div class="t" style="left:1319px;width:600px;text-align:right;top:590.9px;font-size:35px;color:#252423;font-weight:700;font-family:'Liberation Sans', sans-serif;">2164</div>
<div class="t" style="left:1355px;top:1320px;font-size:32px;color:#252423;font-weight:700;font-family:'Liberation Sans', sans-serif;">总计</div>
<div class="t" style="left:1151px;width:600px;text-align:right;top:1316.9px;font-size:35px;color:#252423;font-weight:700;font-family:'Liberation Sans', sans-serif;">3096</div>
<div class="t" style="left:1321px;width:600px;text-align:right;top:1316.9px;font-size:35px;color:#252423;font-weight:700;font-family:'Liberation Sans', sans-serif;">932</div>
<div style="left:1981px;top:513px;width:11px;height:288px;background:#a8a8a8;border-radius:6px;"></div>
<div style="left:2157px;top:148px;width:362px;height:1237px;background:#f3f2f1;"></div>
<div style="left:2518px;top:148px;width:2px;height:1237px;background:#e1dfdd;"></div>
<div class="t" style="left:2175px;top:176px;font-size:31px;color:#252423;font-weight:700;font-family:'Liberation Sans', sans-serif;">可视化</div>
<svg style="position:absolute;left:2474px;top:176px;" width="32" height="28" viewBox="0 0 32 28"><path d="M4 3 L15 14 L4 25 M15 3 L26 14 L15 25" fill="none" stroke="#252423" stroke-width="2.4"/></svg>
<div class="t" style="left:2175px;top:234px;font-size:23.5px;color:#252423;font-weight:700;font-family:'Liberation Sans', sans-serif;">生成视觉对象</div>
<div style="left:2174px;top:270px;width:64px;height:64px;background:#d2d0ce;border-radius:5px;"></div>
<svg style="position:absolute;left:2178px;top:274px;" width="56" height="56" viewBox="0 0 56 56"><path d="M4 5 H42" stroke="#252423" stroke-width="2"/><rect x="4.5" y="13.5" width="47" height="16" fill="#117865" stroke="#252423" stroke-width="2" stroke-dasharray="3 2"/><rect x="4.5" y="35.5" width="47" height="16" fill="#117865" stroke="#252423" stroke-width="2" stroke-dasharray="3 2"/></svg>
<svg style="position:absolute;left:2316px;top:278px;" width="50" height="50" viewBox="0 0 50 50"><path d="M3.5 39 V19.5 H15.5 M15.5 34 V3 H28.5 V12 H40.5 M28.5 12 V30" fill="none" stroke="#252423" stroke-width="2.4"/><path d="M46 17 Q41 25 27.5 36.5 L24 33 Q36 21.5 46 17 Z" fill="#f3f2f1" stroke="#252423" stroke-width="2.2" stroke-linejoin="round"/><path d="M8.5 43.8 Q14 47 19.5 46 Q26 44.5 27 37.5 L23 33.5 Q16 35 14 40 Q12 43.5 8.5 43.8 Z" fill="#f3f2f1" stroke="#252423" stroke-width="2.2" stroke-linejoin="round"/></svg>
<svg style="position:absolute;left:2444px;top:276px;" width="54" height="54" viewBox="0 0 54 54"><circle cx="22.3" cy="22.4" r="19.5" fill="none" stroke="#252423" stroke-width="2.4"/><path d="M3.5 22.4 L12.6 18 L20.7 22.4 L36.8 12.3" fill="none" stroke="#252423" stroke-width="2.2"/><path d="M12.6 26 V39.5 M19.6 25 V41.5 M26.6 21 V41.5 M33.6 17 V38" stroke="#252423" stroke-width="2.2"/><path d="M36 34.5 L49.5 50" stroke="#252423" stroke-width="5" stroke-dasharray="2.6 0.9"/></svg>
<svg style="position:absolute;left:2157px;top:340px;" width="362" height="22" viewBox="0 0 362 22"><path d="M0 19 H33 L49 3 L65 19 H362" fill="none" stroke="#8a8886" stroke-width="2"/></svg>
<svg style="position:absolute;left:2180px;top:382px;overflow:visible;" width="36" height="36" viewBox="0 0 36 36"><path d="M1.5 1 V35 H36" fill="none" stroke="#252423" stroke-width="2"/><rect x="2" y="5" width="9" height="8" fill="#fafafa" stroke="#252423" stroke-width="2"/><rect x="11" y="5" width="12" height="8" fill="#8cbeec" stroke="#1a6fc2" stroke-width="2"/><rect x="2" y="21" width="11" height="8" fill="#fafafa" stroke="#252423" stroke-width="2"/><rect x="13" y="21" width="15" height="8" fill="#c8c6c4" stroke="#888" stroke-width="2"/></svg>
<svg style="position:absolute;left:2236px;top:382px;overflow:visible;" width="36" height="36" viewBox="0 0 36 36"><path d="M1.5 1 V35 H36" fill="none" stroke="#252423" stroke-width="2"/><rect x="6" y="18" width="7" height="17" fill="#fafafa" stroke="#252423" stroke-width="2"/><rect x="6" y="10" width="7" height="12" fill="#8cbeec" stroke="#1a6fc2" stroke-width="2"/><rect x="23" y="21" width="7" height="14" fill="#fafafa" stroke="#252423" stroke-width="2"/><rect x="23" y="4" width="7" height="17" fill="#c8c6c4" stroke="#888" stroke-width="2"/></svg>
<svg style="position:absolute;left:2292px;top:382px;overflow:visible;" width="36" height="36" viewBox="0 0 36 36"><path d="M1.5 1 V35 H36" fill="none" stroke="#252423" stroke-width="2"/><rect x="2" y="2" width="33" height="7" fill="#8cbeec" stroke="#1a6fc2" stroke-width="2"/><rect x="2" y="9" width="20" height="7" fill="#fafafa" stroke="#666" stroke-width="2"/><rect x="2" y="16" width="14" height="7" fill="#c8c6c4" stroke="#888" stroke-width="2"/><rect x="2" y="23" width="25" height="7" fill="#fafafa" stroke="#666" stroke-width="2"/></svg>
<svg style="position:absolute;left:2348px;top:382px;overflow:visible;" width="36" height="36" viewBox="0 0 36 36"><path d="M1.5 1 V35 H36" fill="none" stroke="#252423" stroke-width="2"/><rect x="4" y="2" width="7" height="33" fill="#8cbeec" stroke="#1a6fc2" stroke-width="2"/><rect x="11" y="15" width="6" height="20" fill="#fafafa" stroke="#666" stroke-width="2"/><rect x="19" y="20" width="6" height="15" fill="#c8c6c4" stroke="#888" stroke-width="2"/><rect x="27" y="10" width="7" height="25" fill="#fafafa" stroke="#666" stroke-width="2"/></svg>
<svg style="position:absolute;left:2404px;top:382px;overflow:visible;" width="36" height="36" viewBox="0 0 36 36"><path d="M1.5 1 V35 H36" fill="none" stroke="#252423" stroke-width="2"/><rect x="2" y="5" width="8" height="8" fill="#fafafa" stroke="#252423" stroke-width="2"/><rect x="10" y="5" width="22" height="8" fill="#8cbeec" stroke="#1a6fc2" stroke-width="2"/><rect x="2" y="21" width="19" height="8" fill="#fafafa" stroke="#252423" stroke-width="2"/><rect x="21" y="21" width="11" height="8" fill="#c8c6c4" stroke="#888" stroke-width="2"/></svg>
<svg style="position:absolute;left:2460px;top:382px;overflow:visible;" width="36" height="36" viewBox="0 0 36 36"><path d="M1.5 1 V35 H36" fill="none" stroke="#252423" stroke-width="2"/><rect x="6" y="4" width="7" height="23" fill="#8cbeec" stroke="#1a6fc2" stroke-width="2"/><rect x="6" y="27" width="7" height="8" fill="#fafafa" stroke="#252423" stroke-width="2"/><rect x="22" y="4" width="7" height="11" fill="#c8c6c4" stroke="#888" stroke-width="2"/><rect x="22" y="15" width="7" height="20" fill="#fafafa" stroke="#252423" stroke-width="2"/></svg>
<svg style="position:absolute;left:2180px;top:438px;overflow:visible;" width="36" height="36" viewBox="0 0 36 36"><path d="M1.5 1 V35 H36" fill="none" stroke="#252423" stroke-width="2"/><path d="M2 28 L22 6 L34 17" fill="none" stroke="#1a6fc2" stroke-width="2"/><path d="M2 22 L13 12 L21 19 L34 7" fill="none" stroke="#252423" stroke-width="2"/></svg>
<svg style="position:absolute;left:2236px;top:438px;overflow:visible;" width="36" height="36" viewBox="0 0 36 36"><path d="M1.5 1 V35 H36" fill="none" stroke="#252423" stroke-width="2"/><path d="M1.5 25 L12 3 L22 18 L8 31 Z" fill="#fafafa" stroke="#252423" stroke-width="2"/><path d="M22 18 L28.5 1.5 L35 15 V35 H22 Z" fill="#c8c6c4" stroke="#777" stroke-width="2"/><path d="M1.5 24 L8 31 L20 14 L35 35 H1.5 Z" fill="#8cbeec" stroke="#1a6fc2" stroke-width="2"/></svg>
<svg style="position:absolute;left:2292px;top:438px;overflow:visible;" width="36" height="36" viewBox="0 0 36 36"><path d="M1.5 1 V35 H36" fill="none" stroke="#252423" stroke-width="2"/><path d="M2 9 L12 18 L24 5 L30 11 H35 V29 L23 18 L12 29 L2 25 Z" fill="#8cbeec" stroke="#1a6fc2" stroke-width="2"/></svg>
<svg style="position:absolute;left:2348px;top:438px;overflow:visible;" width="36" height="36" viewBox="0 0 36 36"><path d="M1.5 1 V35 H36" fill="none" stroke="#252423" stroke-width="2"/><path d="M2 3 H35 V24 L28 18 L17 29 L2 17 Z" fill="#8cbeec" stroke="#1a6fc2" stroke-width="2"/></svg>
<svg style="position:absolute;left:2404px;top:438px;overflow:visible;" width="36" height="36" viewBox="0 0 36 36"><path d="M1.5 1 V35 H36" fill="none" stroke="#252423" stroke-width="2"/><rect x="5" y="3" width="7" height="18" fill="#8cbeec" stroke="#1a6fc2" stroke-width="2"/><rect x="21" y="4" width="7" height="12" fill="#c8c6c4" stroke="#888" stroke-width="2"/><path d="M2 34 L12 22 L20 30 L34 14" fill="none" stroke="#252423" stroke-width="2"/></svg>
<svg style="position:absolute;left:2460px;top:438px;overflow:visible;" width="36" height="36" viewBox="0 0 36 36"><path d="M1.5 1 V35 H36" fill="none" stroke="#252423" stroke-width="2"/><rect x="6" y="15" width="7" height="20" fill="#8cbeec" stroke="#1a6fc2" stroke-width="2"/><rect x="14" y="3" width="7" height="32" fill="#fafafa" stroke="#252423" stroke-width="2"/><rect x="22" y="9" width="7" height="26" fill="#c8c6c4" stroke="#888" stroke-width="2"/><path d="M2 34 L12 22 L20 30 L34 14" fill="none" stroke="#252423" stroke-width="2"/></svg>
<svg style="position:absolute;left:2180px;top:494px;overflow:visible;" width="36" height="36" viewBox="0 0 36 36"><path d="M1.5 1 V35 H36" fill="none" stroke="#252423" stroke-width="2"/><path d="M4 4 Q18 14 34 3 V14 Q18 24 4 14 Z" fill="#c8c6c4" stroke="#888" stroke-width="2"/><path d="M4 22 Q10 14 18 22 Q26 30 34 16" fill="none" stroke="#1a6fc2" stroke-width="5"/><rect x="4" y="20" width="30" height="8" fill="none" stroke="#e07000" stroke-width="2"/></svg>
<svg style="position:absolute;left:2236px;top:494px;overflow:visible;" width="36" height="36" viewBox="0 0 36 36"><path d="M1.5 1 V35 H36" fill="none" stroke="#252423" stroke-width="2"/><rect x="4" y="12" width="7" height="23" fill="#fafafa" stroke="#252423" stroke-width="2"/><rect x="11" y="12" width="7" height="10" fill="#888" stroke="#666" stroke-width="2"/><rect x="18" y="2" width="5" height="20" fill="#1a6fc2"/><rect x="24" y="2" width="8" height="33" fill="#fafafa" stroke="#252423" stroke-width="2"/></svg>
<svg style="position:absolute;left:2292px;top:494px;overflow:visible;" width="36" height="36" viewBox="0 0 36 36"><rect x="1" y="2" width="34" height="11" fill="#8cbeec" stroke="#1a6fc2" stroke-width="2"/><rect x="5" y="13" width="26" height="10" fill="#8cbeec" stroke="#1a6fc2" stroke-width="2"/><rect x="11" y="23" width="14" height="11" fill="#8cbeec" stroke="#1a6fc2" stroke-width="2"/></svg>
<svg style="position:absolute;left:2348px;top:494px;overflow:visible;" width="36" height="36" viewBox="0 0 36 36"><path d="M1.5 1 V35 H36" fill="none" stroke="#252423" stroke-width="2"/><rect x="7" y="9" width="5" height="5" fill="#8cbeec"/><rect x="17" y="15" width="5" height="5" fill="#8cbeec"/><rect x="26" y="22" width="5" height="5" fill="#8cbeec"/><rect x="27" y="3" width="5" height="5" fill="#252423"/><rect x="8" y="25" width="5" height="5" fill="#252423"/></svg>
<svg style="position:absolute;left:2404px;top:494px;overflow:visible;" width="36" height="36" viewBox="0 0 36 36"><circle cx="18" cy="18" r="16" fill="#fafafa" stroke="#252423" stroke-width="2"/><path d="M18 2 A16 16 0 0 1 30 29 L18 18 Z" fill="#8cbeec" stroke="#1a6fc2" stroke-width="2"/></svg>
<svg style="position:absolute;left:2460px;top:494px;overflow:visible;" width="36" height="36" viewBox="0 0 36 36"><circle cx="18" cy="18" r="12" fill="none" stroke="#8cbeec" stroke-width="8"/><path d="M18 2 A16 16 0 1 1 2 18 H10 A8 8 0 1 0 18 10 Z" fill="#8cbeec" stroke="#1a6fc2" stroke-width="2"/><path d="M2 18 A16 16 0 0 1 18 2" fill="none" stroke="#888" stroke-width="2"/></svg>
<svg style="position:absolute;left:2180px;top:550px;overflow:visible;" width="36" height="36" viewBox="0 0 36 36"><rect x="2" y="2" width="32" height="32" fill="#fafafa" stroke="#252423" stroke-width="2"/><rect x="2" y="2" width="15" height="32" fill="#8cbeec" stroke="#1a6fc2" stroke-width="2"/><path d="M2 18 H17 M17 12 H34 M17 23 H34 M25 12 V34" stroke="#252423" stroke-width="2" fill="none"/></svg>
<svg style="position:absolute;left:2236px;top:550px;overflow:visible;" width="36" height="36" viewBox="0 0 36 36"><circle cx="18" cy="16" r="11" fill="#fff" stroke="#252423" stroke-width="1.6"/><path d="M11 12 Q15 6 20 9 Q17 14 21 17 Q16 20 13 17 Z M20 19 Q26 17 27 22 Q23 27 20 25 Z" fill="#2f8a3c"/><path d="M7 6 Q1 16 7 25 Q15 32 26 28" fill="none" stroke="#252423" stroke-width="2"/><path d="M18 29 V33 M10 34 H27" stroke="#252423" stroke-width="2"/></svg>
<svg style="position:absolute;left:2292px;top:550px;overflow:visible;" width="36" height="36" viewBox="0 0 36 36"><path d="M2 4 H14 L16 16 L10 18 L12 28 Q6 30 2 22 Z" fill="#8cbeec" stroke="#1a6fc2" stroke-width="2"/><path d="M16 16 L24 6 H34 V20 H18 Z" fill="#c8c6c4" stroke="#666" stroke-width="2"/><path d="M2 22 L10 18 L18 20 Z" fill="#c8c6c4" stroke="#666" stroke-width="2"/><path d="M18 20 H34 Q34 30 26 31 H18 Q14 33 14 28 Z" fill="#8cbeec" stroke="#1a6fc2" stroke-width="2"/></svg>
<svg style="position:absolute;left:2348px;top:550px;overflow:visible;" width="36" height="36" viewBox="0 0 36 36"><path d="M2 4 H14 L16 16 L10 18 L12 28 Q6 30 2 22 Z" fill="#fafafa" stroke="#1a6fc2" stroke-width="2"/><path d="M16 16 L24 6 H34 V20 H18 Z" fill="#fafafa" stroke="#252423" stroke-width="2"/><path d="M18 20 H34 Q34 30 26 31 H18 Q14 33 14 28 Z" fill="#fafafa" stroke="#1a6fc2" stroke-width="2"/></svg>
<svg style="position:absolute;left:2404px;top:550px;overflow:visible;" width="36" height="36" viewBox="0 0 36 36"><path d="M22 1 L29 36 L20 28 L3 34 Z" fill="#3a9bd5"/><path d="M22 1 L29 36 L20 28 Z" fill="#1a6fc2"/></svg>
<svg style="position:absolute;left:2460px;top:550px;overflow:visible;" width="36" height="36" viewBox="0 0 36 36"><path d="M2 28 A16 16 0 0 1 34 28" fill="none" stroke="#252423" stroke-width="3"/><path d="M14 13 A16 16 0 0 1 34 28 H27 A9 9 0 0 0 17 19 Z" fill="#8cbeec" stroke="#1a6fc2" stroke-width="2"/><path d="M18 27 L27 18" stroke="#252423" stroke-width="3"/></svg>
<svg style="position:absolute;left:2180px;top:606px;overflow:visible;" width="36" height="36" viewBox="0 0 36 36"><rect x="3" y="9" width="30" height="25" fill="#fafafa" stroke="#252423" stroke-width="2"/><text x="9" y="27" font-family="Liberation Sans" font-size="13" fill="#1a6fc2">123</text><path d="M6 30 H30" stroke="#888" stroke-width="2"/><path d="M10 0 H18 L13 9 H17 L4 24 L8 13 H4 Z" fill="#f2a30f" stroke="#e07000" stroke-width="1.2"/></svg>
<svg style="position:absolute;left:2236px;top:606px;overflow:visible;" width="36" height="36" viewBox="0 0 36 36"><rect x="2" y="6" width="32" height="24" fill="#fafafa" stroke="#252423" stroke-width="2"/><path d="M6 19 L10 11 L14 19 Z" fill="#7fd18a" stroke="#2f8a3c" stroke-width="1.4"/><path d="M19 11 H29 L24 18 Z" fill="#f08080" stroke="#c00" stroke-width="1.4"/><path d="M6 25 H30" stroke="#888" stroke-width="2"/></svg>
<svg style="position:absolute;left:2292px;top:606px;overflow:visible;" width="36" height="36" viewBox="0 0 36 36"><path d="M22 32 H2 V4 H34 V22" fill="#fafafa" stroke="#252423" stroke-width="2"/><rect x="2" y="4" width="32" height="4" fill="#c8c6c4"/><rect x="7" y="13" width="5" height="5" fill="none" stroke="#888" stroke-width="2"/><rect x="7" y="22" width="5" height="5" fill="none" stroke="#888" stroke-width="2"/><path d="M19 20 H36 L30 27 V35 H25 V27 Z" fill="#fafafa" stroke="#252423" stroke-width="2"/></svg>
<svg style="position:absolute;left:2348px;top:606px;overflow:visible;" width="36" height="36" viewBox="0 0 36 36"><rect x="2" y="4" width="32" height="30" fill="#fafafa" stroke="#252423" stroke-width="2"/><rect x="2" y="4" width="32" height="5" fill="#c8c6c4"/><path d="M2 18 H34 M2 26 H34 M13 9 V34 M24 9 V34" stroke="#666" stroke-width="2"/></svg>
<svg style="position:absolute;left:2404px;top:606px;overflow:visible;" width="36" height="36" viewBox="0 0 36 36"><rect x="-3" y="-3" width="42" height="42" fill="none" stroke="#252423" stroke-width="2.4"/><rect x="2" y="4" width="32" height="30" fill="#fafafa" stroke="#252423" stroke-width="2"/><rect x="2" y="4" width="32" height="5" fill="#c8c6c4"/><rect x="24" y="9" width="10" height="25" fill="#8cbeec"/><rect x="2" y="26" width="32" height="8" fill="#8cbeec"/><path d="M2 18 H34 M2 26 H34 M13 9 V34 M24 9 V34" stroke="#666" stroke-width="2"/><path d="M2 26 H34 M24 9 V34" stroke="#1a6fc2" stroke-width="2"/></svg>
<div style="left:2398px;top:600px;width:48px;height:48px;border:2.5px solid #252423;"></div>
<svg style="position:absolute;left:2460px;top:606px;overflow:visible;" width="36" height="36" viewBox="0 0 36 36"><text x="0" y="30" font-family="Liberation Sans" font-weight="700" font-size="36" fill="#2a85c8">R</text></svg>
<svg style="position:absolute;left:2180px;top:662px;overflow:visible;" width="36" height="36" viewBox="0 0 36 36"><text x="-5" y="26" font-family="Liberation Sans" font-weight="700" font-size="34" fill="#2a85c8">Py</text></svg>
<svg style="position:absolute;left:2236px;top:662px;overflow:visible;" width="36" height="36" viewBox="0 0 36 36"><path d="M1.5 1 V35 H36" fill="none" stroke="#252423" stroke-width="2"/><path d="M2 7 H25" stroke="#1a6fc2" stroke-width="2"/><circle cx="28" cy="7" r="4" fill="#8cbeec" stroke="#1a6fc2" stroke-width="2"/><path d="M2 17 H18" stroke="#888" stroke-width="2"/><circle cx="21" cy="17" r="3" fill="none" stroke="#888" stroke-width="2"/><path d="M2 26 H12" stroke="#888" stroke-width="2"/><circle cx="15" cy="26" r="3" fill="none" stroke="#888" stroke-width="2"/></svg>
<svg style="position:absolute;left:2292px;top:662px;overflow:visible;" width="36" height="36" viewBox="0 0 36 36"><rect x="1" y="13" width="11" height="8" fill="#8cbeec" stroke="#1a6fc2" stroke-width="2"/><path d="M12 17 H17 M17 6 V29 M17 6 H22 M17 17 H22 M17 29 H22" stroke="#252423" stroke-width="2" fill="none"/><rect x="22" y="2" width="12" height="8" fill="#8cbeec" stroke="#1a6fc2" stroke-width="2"/><rect x="22" y="13" width="12" height="8" fill="#8cbeec" stroke="#1a6fc2" stroke-width="2"/><rect x="22" y="25" width="12" height="8" fill="#8cbeec" stroke="#1a6fc2" stroke-width="2"/></svg>
<svg style="position:absolute;left:2348px;top:662px;overflow:visible;" width="36" height="36" viewBox="0 0 36 36"><path d="M2 4 H34 V26 H12 L6 34 V26 H2 Z" fill="#fafafa" stroke="#1a6fc2" stroke-width="2"/></svg>
<svg style="position:absolute;left:2404px;top:662px;overflow:visible;" width="36" height="36" viewBox="0 0 36 36"><path d="M6 2 H24 L32 10 V35 H6 Z" fill="#fafafa" stroke="#252423" stroke-width="2"/><path d="M24 2 V10 H32" fill="none" stroke="#252423" stroke-width="2"/><circle cx="4" cy="14" r="3" fill="#8cbeec" stroke="#1a6fc2" stroke-width="1.5"/><path d="M12 16 H26 M10 22 H20" stroke="#1a6fc2" stroke-width="2"/></svg>
<svg style="position:absolute;left:2460px;top:662px;overflow:visible;" width="36" height="36" viewBox="0 0 36 36"><rect x="8" y="2" width="20" height="4" fill="#8cbeec" stroke="#1a6fc2" stroke-width="1.6"/><path d="M8 4 V16 Q8 24 18 24 Q28 24 28 16 V4" fill="#fafafa" stroke="#252423" stroke-width="2"/><path d="M8 6 H2 V12 Q2 17 8 18 M28 6 H34 V12 Q34 17 28 18" fill="none" stroke="#252423" stroke-width="2"/><path d="M18 24 V28 M12 30 H24" stroke="#252423" stroke-width="2"/><rect x="9" y="31" width="18" height="4" fill="#8cbeec" stroke="#1a6fc2" stroke-width="1.6"/></svg>
<svg style="position:absolute;left:2180px;top:718px;overflow:visible;" width="36" height="36" viewBox="0 0 36 36"><path d="M3 2 H21 L30 11 V35 H3 Z" fill="#fafafa" stroke="#252423" stroke-width="2.2"/><path d="M21 2 V11 H30" fill="none" stroke="#252423" stroke-width="2"/><rect x="8" y="24" width="4" height="8" fill="#252423"/><rect x="14" y="27" width="4" height="5" fill="#252423"/><rect x="21" y="18" width="4" height="14" fill="#252423"/></svg>
<svg style="position:absolute;left:2236px;top:718px;overflow:visible;" width="36" height="36" viewBox="0 0 36 36"><rect x="20" y="2" width="11" height="11" fill="#fafafa" stroke="#777" stroke-width="2"/><rect x="4" y="20" width="12" height="13" fill="#fafafa" stroke="#777" stroke-width="2"/><path d="M18 20 H36 L30 27 V35 H24 V27 Z" fill="#fafafa" stroke="#252423" stroke-width="2"/><path d="M7 0 H16 L11 9 H15 L2 24 L6 13 H2 Z" fill="#f2a30f" stroke="#e07000" stroke-width="1.2"/></svg>
<svg style="position:absolute;left:2292px;top:718px;overflow:visible;" width="36" height="36" viewBox="0 0 36 36"><path d="M16 2 H32 V18 M22 33 H3 V20" fill="none" stroke="#252423" stroke-width="2"/><path d="M11 30 L18 8 L22 20" fill="none" stroke="#2a85c8" stroke-width="1.6"/><path d="M18 20 H36 L30 27 V35 H24 V27 Z" fill="#fafafa" stroke="#252423" stroke-width="2"/><path d="M7 0 H16 L11 9 H15 L2 24 L6 13 H2 Z" fill="#f2a30f" stroke="#e07000" stroke-width="1.2"/></svg>
<svg style="position:absolute;left:2348px;top:718px;overflow:visible;" width="36" height="36" viewBox="0 0 36 36"><path d="M16 2 H32 V18 M22 33 H3 V20" fill="none" stroke="#252423" stroke-width="2"/><path d="M16 9 H28" stroke="#777" stroke-width="2"/><rect x="8" y="22" width="4" height="4" fill="none" stroke="#777" stroke-width="1.6"/><path d="M18 20 H36 L30 27 V35 H24 V27 Z" fill="#fafafa" stroke="#252423" stroke-width="2"/><path d="M7 0 H16 L11 9 H15 L2 24 L6 13 H2 Z" fill="#f2a30f" stroke="#e07000" stroke-width="1.2"/></svg>
<svg style="position:absolute;left:2404px;top:718px;overflow:visible;" width="36" height="36" viewBox="0 0 36 36"><rect x="2" y="5" width="32" height="26" fill="#fafafa" stroke="#252423" stroke-width="2.2"/><path d="M2 24 L12 14 L25 29 H2 Z" fill="#8cbeec" stroke="#1a6fc2" stroke-width="2"/><path d="M20 24 L26 19 L34 27 V29 H25 Z" fill="#8cbeec" stroke="#1a6fc2" stroke-width="2"/><circle cx="27" cy="11" r="2" fill="#e07000"/></svg>
<svg style="position:absolute;left:2460px;top:718px;overflow:visible;" width="36" height="36" viewBox="0 0 36 36"><path d="M14 4 H33 V21 Q28 24 30 28 V37 H13 Q10 35 16 32 Q22 26 19 20 Q24 14 28 16 V8" fill="#8cbeec" stroke="#1a6fc2" stroke-width="2"/><path d="M14 4 H33 V28 M13 37 V20" fill="none" stroke="#1a6fc2" stroke-width="2.4"/><path d="M1 3 Q1 0 5 0 H9 Q12 0 12 3 V13 L6 20 L1 14 Z" fill="#e07000"/><circle cx="6" cy="8" r="2.2" fill="#fff"/><circle cx="32" cy="21" r="3" fill="#e07000"/><circle cx="30" cy="30" r="5" fill="#e07000"/></svg>
<svg style="position:absolute;left:2180px;top:774px;overflow:visible;" width="36" height="36" viewBox="0 0 36 36"><path d="M14 2 L25 13 L14 24 L3 13 Z" fill="none" stroke="#8e2fa6" stroke-width="2" transform="translate(0,5)"/><path d="M14 7 L20 1 L34 16 L20 31 L14 26" fill="none" stroke="#8e2fa6" stroke-width="2" transform="translate(0,3)"/><path d="M11 21 L26 6 M14 27 L27 14" stroke="#8e2fa6" stroke-width="1.6"/></svg>
<svg style="position:absolute;left:2236px;top:774px;overflow:visible;" width="36" height="36" viewBox="0 0 36 36"><path d="M2 5 H26 L34 17 L26 29 H2 L12 17 Z" fill="#fafafa" stroke="#1a7ee0" stroke-width="2"/><path d="M26 5 L12 29 M17 29 L29 12" stroke="#1a7ee0" stroke-width="2"/></svg>
<svg style="position:absolute;left:2292px;top:783px;" width="40" height="10" viewBox="0 0 40 10"><circle cx="6" cy="5" r="2.3" fill="#252423"/><circle cx="18" cy="5" r="2.3" fill="#252423"/><circle cx="30" cy="5" r="2.3" fill="#252423"/></svg>
<svg style="position:absolute;left:2170px;top:823px;" width="337" height="4" viewBox="0 0 337 4"><line x1="0" y1="2" x2="337" y2="2" stroke="#d6d4d2" stroke-width="2" stroke-dasharray="6 4"/></svg>
<div style="left:2157px;top:846px;width:361px;height:2px;background:#dcdad8;"></div>
<div style="left:2506px;top:852px;width:12px;height:533px;background:#8a8886;border-radius:6px 6px 0 0;"></div>
<div class="t" style="left:2183px;top:869px;font-size:24px;color:#252423;font-weight:400;font-family:'Liberation Sans', sans-serif;">行</div>
<svg style="position:absolute;left:2167px;top:911px;" width="339" height="74" viewBox="0 0 339 74"><rect x="1" y="1" width="337" height="72" rx="3" fill="#fff" stroke="#c8c6c4" stroke-width="1.6" stroke-dasharray="4 3"/></svg>
<div style="left:2173px;top:919px;width:327px;height:46px;background:#ebebeb;border:1.5px solid #c8c6c4;border-radius:4px;"></div>
<div class="t" style="left:2183px;top:931px;font-size:23px;color:#252423;font-weight:400;font-family:'Liberation Sans', sans-serif;letter-spacing:-0.5px;-webkit-text-stroke:0.35px #ebebeb;">Date</div>
<svg style="position:absolute;left:2436px;top:931px;" width="26" height="20" viewBox="0 0 26 20"><path d="M2 4 L12 14 L22 4" fill="none" stroke="#252423" stroke-width="2"/></svg>
<svg style="position:absolute;left:2470px;top:931px;" width="22" height="22" viewBox="0 0 22 22"><path d="M3 3 L18 18 M18 3 L3 18" stroke="#252423" stroke-width="2"/></svg>
<div class="t" style="left:2183px;top:1010px;font-size:24px;color:#252423;font-weight:400;font-family:'Liberation Sans', sans-serif;">列</div>
<svg style="position:absolute;left:2167px;top:1052px;" width="339" height="56" viewBox="0 0 339 56"><rect x="1" y="1" width="337" height="54" rx="3" fill="#fff" stroke="#c8c6c4" stroke-width="1.6" stroke-dasharray="4 3"/></svg>
<div class="t" style="left:2188px;top:1069px;font-size:23.5px;color:#484644;font-weight:400;font-family:'Liberation Sans', sans-serif;">在此处添加数据字段</div>
<div class="t" style="left:2183px;top:1134px;font-size:24px;color:#252423;font-weight:400;font-family:'Liberation Sans', sans-serif;">值</div>
<svg style="position:absolute;left:2167px;top:1176px;" width="339" height="174" viewBox="0 0 339 174"><rect x="1" y="1" width="337" height="172" rx="3" fill="#fff" stroke="#c8c6c4" stroke-width="1.6" stroke-dasharray="4 3"/></svg>
<div style="left:2173px;top:1184px;width:327px;height:46px;background:#ebebeb;border:1.5px solid #c8c6c4;border-radius:4px;"></div>
<div class="t" style="left:2183px;top:1196px;font-size:23px;color:#252423;font-weight:400;font-family:'Liberation Sans', sans-serif;letter-spacing:-0.5px;-webkit-text-stroke:0.35px #ebebeb;">Sales</div>
<svg style="position:absolute;left:2436px;top:1196px;" width="26" height="20" viewBox="0 0 26 20"><path d="M2 4 L12 14 L22 4" fill="none" stroke="#252423" stroke-width="2"/></svg>
<svg style="position:absolute;left:2470px;top:1196px;" width="22" height="22" viewBox="0 0 22 22"><path d="M3 3 L18 18 M18 3 L3 18" stroke="#252423" stroke-width="2"/></svg>
<div style="left:2173px;top:1234px;width:327px;height:46px;background:#ebebeb;border:1.5px solid #c8c6c4;border-radius:4px;"></div>
<div class="t" style="left:2183px;top:1246px;font-size:23px;color:#252423;font-weight:400;font-family:'Liberation Sans', sans-serif;letter-spacing:-0.5px;-webkit-text-stroke:0.35px #ebebeb;">Sales.MTD</div>
<svg style="position:absolute;left:2436px;top:1246px;" width="26" height="20" viewBox="0 0 26 20"><path d="M2 4 L12 14 L22 4" fill="none" stroke="#252423" stroke-width="2"/></svg>
<svg style="position:absolute;left:2470px;top:1246px;" width="22" height="22" viewBox="0 0 22 22"><path d="M3 3 L18 18 M18 3 L3 18" stroke="#252423" stroke-width="2"/></svg>
<div style="left:2173px;top:1284px;width:327px;height:46px;background:#ebebeb;border:1.5px solid #c8c6c4;border-radius:4px;"></div>
<div class="t" style="left:2183px;top:1296px;font-size:23px;color:#252423;font-weight:400;font-family:'Liberation Sans', sans-serif;letter-spacing:-0.5px;-webkit-text-stroke:0.35px #ebebeb;">Sales.MTD.PM</div>
<svg style="position:absolute;left:2436px;top:1296px;" width="26" height="20" viewBox="0 0 26 20"><path d="M2 4 L12 14 L22 4" fill="none" stroke="#252423" stroke-width="2"/></svg>
<svg style="position:absolute;left:2470px;top:1296px;" width="22" height="22" viewBox="0 0 22 22"><path d="M3 3 L18 18 M18 3 L3 18" stroke="#252423" stroke-width="2"/></svg>
<div class="t" style="left:2183px;top:1372px;font-size:22px;color:#252423;font-weight:700;font-family:'Liberation Sans', sans-serif;">钻取</div>
<div style="left:2520px;top:148px;width:360px;height:1237px;background:#f3f2f1;"></div>
<div class="t" style="left:2537px;top:175px;font-size:31px;color:#252423;font-weight:700;font-family:'Liberation Sans', sans-serif;">数据</div>
<svg style="position:absolute;left:2836px;top:176px;" width="32" height="28" viewBox="0 0 32 28"><path d="M4 3 L15 14 L4 25 M15 3 L26 14 L15 25" fill="none" stroke="#252423" stroke-width="2.4"/></svg>
<div style="left:2529px;top:244px;width:342px;height:47px;background:#fff;border:1px solid #c8c6c4;border-bottom:2px solid #605e5c;border-radius:6px;"></div>
<svg style="position:absolute;left:2550px;top:250px;" width="36" height="36" viewBox="0 0 36 36"><circle cx="15" cy="15" r="12" fill="none" stroke="#505050" stroke-width="1.8"/><path d="M23.5 23.5 L32 32" stroke="#505050" stroke-width="2"/></svg>
<div class="t" style="left:2597px;top:253px;font-size:27.5px;color:#707070;font-weight:400;font-family:'Liberation Sans', sans-serif;">搜索</div>
<div style="left:2530px;top:501px;width:340px;height:48px;background:#e1dfdd;border-radius:8px;"></div>
<div style="left:2530px;top:501px;width:8px;height:48px;background:#117865;border-radius:8px 0 0 8px;"></div>
<svg style="position:absolute;left:2545px;top:326px;" width="26" height="16" viewBox="0 0 26 16"><path d="M2 2 L12 12 L22 2" fill="none" stroke="#252423" stroke-width="2"/></svg>
<svg style="position:absolute;left:2577px;top:321px;" width="30" height="28" viewBox="0 0 30 28"><rect x="2" y="2" width="25" height="23" rx="4" fill="none" stroke="#252423" stroke-width="2"/><path d="M2 10 H27 M2 17 H27 M10 2 V25 M18 2 V25" stroke="#252423" stroke-width="2"/></svg>
<svg style="position:absolute;left:2587px;top:332px;" width="28" height="28" viewBox="0 0 28 28"><circle cx="14" cy="14" r="12.5" fill="#117865" stroke="#f3f2f1" stroke-width="1.5"/><path d="M9 14 L13 18 L19 10" fill="none" stroke="#fff" stroke-width="2.4"/></svg>
<div class="t" style="left:2615px;top:323px;font-size:23px;color:#252423;font-weight:400;font-family:'Liberation Sans', sans-serif;letter-spacing:-0.35px;-webkit-text-stroke:0.35px #f3f2f1;">D_Calendar</div>
<div style="left:2608px;top:370px;width:24px;height:24px;background:#117865;border:2px solid #8a8886;border-radius:3px;"></div>
<svg style="position:absolute;left:2610px;top:372px;" width="20" height="20" viewBox="0 0 20 20"><path d="M3 10 L8 15 L17 5" fill="none" stroke="#fff" stroke-width="2"/></svg>
<div class="t" style="left:2684px;top:371.5px;font-size:23px;color:#252423;font-weight:400;font-family:'Liberation Sans', sans-serif;letter-spacing:-0.35px;-webkit-text-stroke:0.35px #f3f2f1;">Date</div>
<div style="left:2608px;top:418px;width:24px;height:24px;background:#117865;border:2px solid #8a8886;border-radius:3px;"></div>
<svg style="position:absolute;left:2610px;top:420px;" width="20" height="20" viewBox="0 0 20 20"><path d="M3 10 L8 15 L17 5" fill="none" stroke="#fff" stroke-width="2"/></svg>
<svg style="position:absolute;left:2647px;top:416px;" width="26" height="29" viewBox="0 0 26 29"><rect x="1.5" y="1.5" width="22" height="26" rx="4" fill="none" stroke="#252423" stroke-width="2"/><rect x="6" y="5.5" width="13" height="5" rx="1" fill="none" stroke="#252423" stroke-width="1.6"/><circle cx="7.5" cy="16.0" r="1.5" fill="#252423"/><circle cx="7.5" cy="21.5" r="1.5" fill="#252423"/><circle cx="12.5" cy="16.0" r="1.5" fill="#252423"/><circle cx="12.5" cy="21.5" r="1.5" fill="#252423"/><circle cx="17.5" cy="16.0" r="1.5" fill="#252423"/><circle cx="17.5" cy="21.5" r="1.5" fill="#252423"/></svg>
<div class="t" style="left:2684px;top:419.5px;font-size:23px;color:#252423;font-weight:400;font-family:'Liberation Sans', sans-serif;letter-spacing:-0.35px;-webkit-text-stroke:0.35px #f3f2f1;">Sales</div>
<div style="left:2608px;top:466px;width:24px;height:24px;background:#117865;border:2px solid #8a8886;border-radius:3px;"></div>
<svg style="position:absolute;left:2610px;top:468px;" width="20" height="20" viewBox="0 0 20 20"><path d="M3 10 L8 15 L17 5" fill="none" stroke="#fff" stroke-width="2"/></svg>
<svg style="position:absolute;left:2647px;top:464px;" width="26" height="29" viewBox="0 0 26 29"><rect x="1.5" y="1.5" width="22" height="26" rx="4" fill="none" stroke="#252423" stroke-width="2"/><rect x="6" y="5.5" width="13" height="5" rx="1" fill="none" stroke="#252423" stroke-width="1.6"/><circle cx="7.5" cy="16.0" r="1.5" fill="#252423"/><circle cx="7.5" cy="21.5" r="1.5" fill="#252423"/><circle cx="12.5" cy="16.0" r="1.5" fill="#252423"/><circle cx="12.5" cy="21.5" r="1.5" fill="#252423"/><circle cx="17.5" cy="16.0" r="1.5" fill="#252423"/><circle cx="17.5" cy="21.5" r="1.5" fill="#252423"/></svg>
<div class="t" style="left:2684px;top:467.5px;font-size:23px;color:#252423;font-weight:400;font-family:'Liberation Sans', sans-serif;letter-spacing:-0.35px;-webkit-text-stroke:0.35px #f3f2f1;">Sales.MTD</div>
<div style="left:2608px;top:514px;width:24px;height:24px;background:#117865;border:2px solid #8a8886;border-radius:3px;"></div>
<svg style="position:absolute;left:2610px;top:516px;" width="20" height="20" viewBox="0 0 20 20"><path d="M3 10 L8 15 L17 5" fill="none" stroke="#fff" stroke-width="2"/></svg>
<svg style="position:absolute;left:2647px;top:512px;" width="26" height="29" viewBox="0 0 26 29"><rect x="1.5" y="1.5" width="22" height="26" rx="4" fill="none" stroke="#252423" stroke-width="2"/><rect x="6" y="5.5" width="13" height="5" rx="1" fill="none" stroke="#252423" stroke-width="1.6"/><circle cx="7.5" cy="16.0" r="1.5" fill="#252423"/><circle cx="7.5" cy="21.5" r="1.5" fill="#252423"/><circle cx="12.5" cy="16.0" r="1.5" fill="#252423"/><circle cx="12.5" cy="21.5" r="1.5" fill="#252423"/><circle cx="17.5" cy="16.0" r="1.5" fill="#252423"/><circle cx="17.5" cy="21.5" r="1.5" fill="#252423"/></svg>
<div class="t" style="left:2684px;top:515.5px;font-size:23px;color:#252423;font-weight:400;font-family:'Liberation Sans', sans-serif;letter-spacing:-0.35px;-webkit-text-stroke:0.35px #e1dfdd;">Sales.MTD.PM</div>
<div style="left:2608px;top:562px;width:24px;height:24px;background:#fff0;border:2px solid #8a8886;border-radius:3px;"></div>
<div class="t" style="left:2684px;top:563.5px;font-size:23px;color:#252423;font-weight:400;font-family:'Liberation Sans', sans-serif;letter-spacing:-0.35px;-webkit-text-stroke:0.35px #f3f2f1;">YearMonth</div>
<svg style="position:absolute;left:2545px;top:614px;" width="26" height="16" viewBox="0 0 26 16"><path d="M2 2 L12 12 L22 2" fill="none" stroke="#252423" stroke-width="2"/></svg>
<svg style="position:absolute;left:2577px;top:609px;" width="30" height="28" viewBox="0 0 30 28"><rect x="2" y="2" width="25" height="23" rx="4" fill="none" stroke="#252423" stroke-width="2"/><path d="M2 10 H27 M2 17 H27 M10 2 V25 M18 2 V25" stroke="#252423" stroke-width="2"/></svg>
<div class="t" style="left:2615px;top:611px;font-size:23px;color:#252423;font-weight:400;font-family:'Liberation Sans', sans-serif;letter-spacing:-0.35px;-webkit-text-stroke:0.35px #f3f2f1;">F_Orders</div>
<div style="left:2608px;top:658px;width:24px;height:24px;background:#fff0;border:2px solid #8a8886;border-radius:3px;"></div>
<div class="t" style="left:2684px;top:659.5px;font-size:23px;color:#252423;font-weight:400;font-family:'Liberation Sans', sans-serif;letter-spacing:-0.35px;-webkit-text-stroke:0.35px #f3f2f1;">Customer</div>
<div style="left:2608px;top:706px;width:24px;height:24px;background:#fff0;border:2px solid #8a8886;border-radius:3px;"></div>
<div class="t" style="left:2684px;top:707.5px;font-size:23px;color:#252423;font-weight:400;font-family:'Liberation Sans', sans-serif;letter-spacing:-0.35px;-webkit-text-stroke:0.35px #f3f2f1;">OrderDate</div>
<div style="left:2608px;top:754px;width:24px;height:24px;background:#fff0;border:2px solid #8a8886;border-radius:3px;"></div>
<div class="t" style="left:2684px;top:755.5px;font-size:23px;color:#252423;font-weight:400;font-family:'Liberation Sans', sans-serif;letter-spacing:-0.35px;-webkit-text-stroke:0.35px #f3f2f1;">OrderID</div>
<div style="left:2608px;top:802px;width:24px;height:24px;background:#fff0;border:2px solid #8a8886;border-radius:3px;"></div>
<div class="t" style="left:2684px;top:803.5px;font-size:23px;color:#252423;font-weight:400;font-family:'Liberation Sans', sans-serif;letter-spacing:-0.35px;-webkit-text-stroke:0.35px #f3f2f1;">Product</div>
<div style="left:2608px;top:850px;width:24px;height:24px;background:#fff0;border:2px solid #8a8886;border-radius:3px;"></div>
<svg style="position:absolute;left:2647px;top:849px;" width="24" height="28" viewBox="0 0 24 28"><path d="M21 3.5 H2.5 L12 14 L2.5 24.5 H21" fill="none" stroke="#252423" stroke-width="2" stroke-linejoin="miter"/></svg>
<div class="t" style="left:2684px;top:851.5px;font-size:23px;color:#252423;font-weight:400;font-family:'Liberation Sans', sans-serif;letter-spacing:-0.35px;-webkit-text-stroke:0.35px #f3f2f1;">Quantity</div>
<div style="left:2608px;top:898px;width:24px;height:24px;background:#fff0;border:2px solid #8a8886;border-radius:3px;"></div>
<div class="t" style="left:2684px;top:899.5px;font-size:23px;color:#252423;font-weight:400;font-family:'Liberation Sans', sans-serif;letter-spacing:-0.35px;-webkit-text-stroke:0.35px #f3f2f1;">Region</div>
<div style="left:2608px;top:946px;width:24px;height:24px;background:#fff0;border:2px solid #8a8886;border-radius:3px;"></div>
<svg style="position:absolute;left:2647px;top:945px;" width="24" height="28" viewBox="0 0 24 28"><path d="M21 3.5 H2.5 L12 14 L2.5 24.5 H21" fill="none" stroke="#252423" stroke-width="2" stroke-linejoin="miter"/></svg>
<div class="t" style="left:2684px;top:947.5px;font-size:23px;color:#252423;font-weight:400;font-family:'Liberation Sans', sans-serif;letter-spacing:-0.35px;-webkit-text-stroke:0.35px #f3f2f1;">SalesAmount</div>
<div style="left:2608px;top:994px;width:24px;height:24px;background:#fff0;border:2px solid #8a8886;border-radius:3px;"></div>
<svg style="position:absolute;left:2647px;top:993px;" width="24" height="28" viewBox="0 0 24 28"><path d="M21 3.5 H2.5 L12 14 L2.5 24.5 H21" fill="none" stroke="#252423" stroke-width="2" stroke-linejoin="miter"/></svg>
<div class="t" style="left:2684px;top:995.5px;font-size:23px;color:#252423;font-weight:400;font-family:'Liberation Sans', sans-serif;letter-spacing:-0.35px;-webkit-text-stroke:0.35px #f3f2f1;">UnitPrice</div>
<div style="left:150px;top:885px;width:1001px;height:98px;border:4px solid #ed1c24;"></div>
<div style="left:1262px;top:1071px;width:715px;height:98px;border:4px solid #ed1c24;"></div>
<svg style="position:absolute;left:0px;top:0px;pointer-events:none;" width="2880" height="1385" viewBox="0 0 2880 1385"><polygon points="980.95,958.00 1814.42,632.19 1808.11,625.64 1837.70,627.20 1816.97,648.37 1817.18,639.27 983.05,963.40" fill="#ed1c24"/><circle cx="982" cy="960.7" r="2.9" fill="#ed1c24"/><polygon points="977.59,910.76 1843.08,1090.97 1841.37,1082.03 1865.30,1099.50 1836.37,1105.91 1841.52,1098.41 976.41,916.44" fill="#ed1c24"/><circle cx="977" cy="913.6" r="2.9" fill="#ed1c24"/></svg>
</body></html>
